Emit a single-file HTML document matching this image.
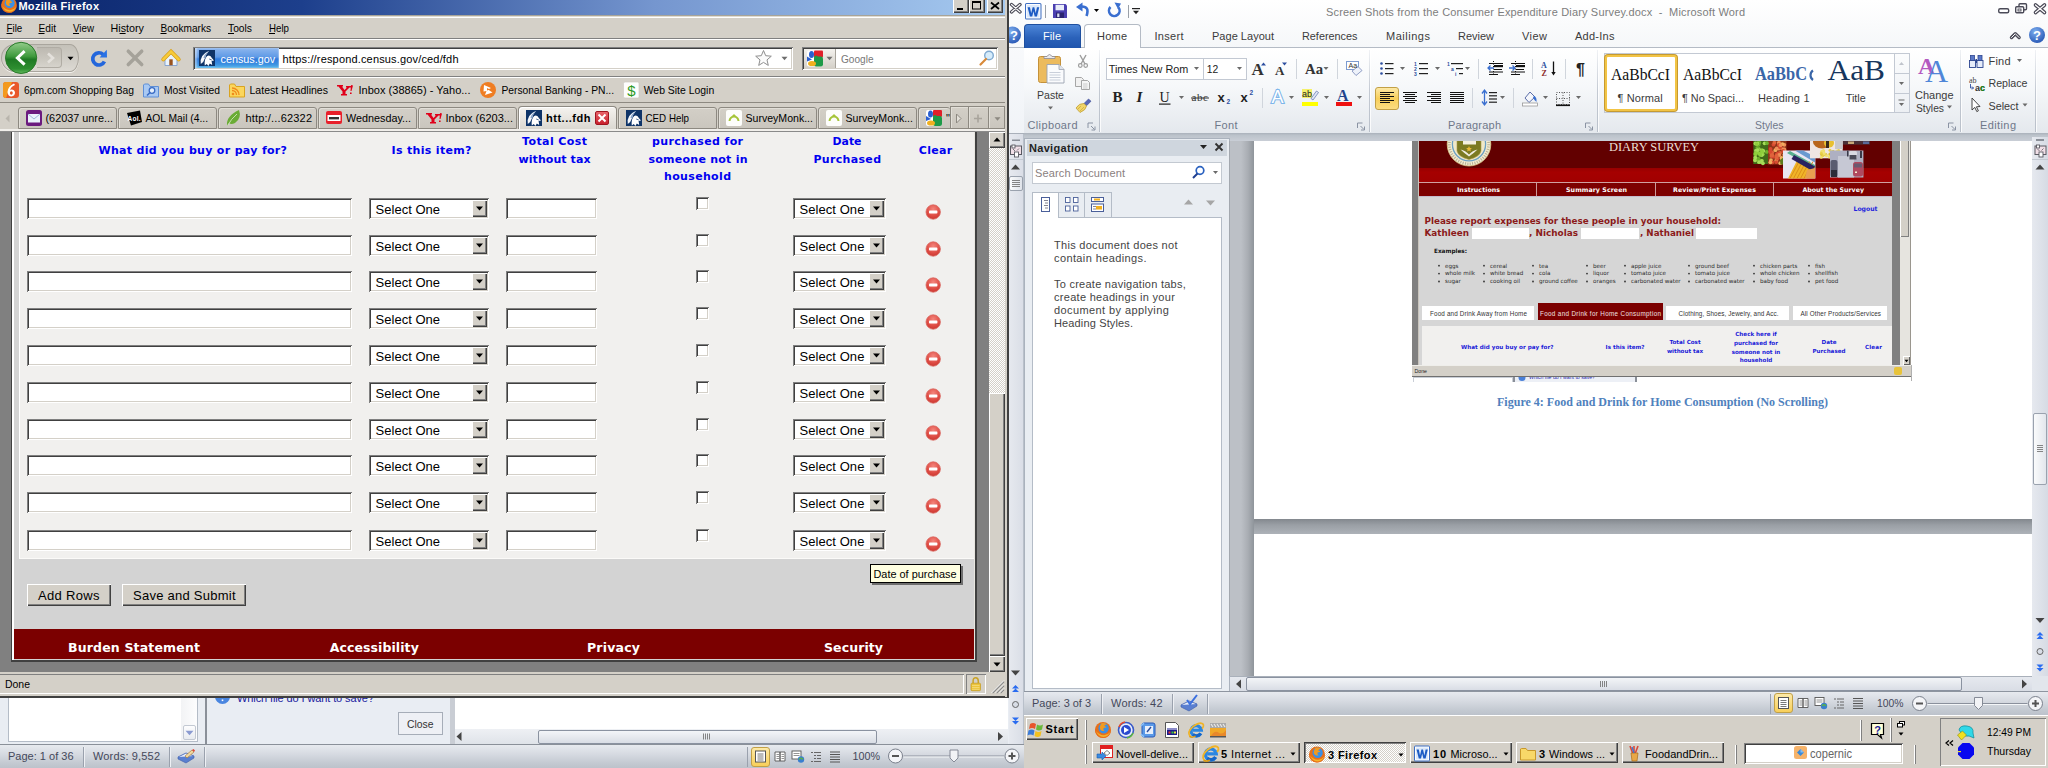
<!DOCTYPE html><html><head><meta charset="utf-8"><title>Mozilla Firefox</title><style>html,body{margin:0;padding:0;background:#fff;overflow:hidden}#r{position:relative;width:2048px;height:768px;overflow:hidden;background:#d4d0c8}#r div{position:absolute;box-sizing:border-box}#r svg.o{position:absolute;left:0;top:0}text{white-space:pre}</style></head><body><div id="r"><div style="left:1009px;top:0px;width:1039px;height:768px;background:#ffffff;"></div>
<div style="left:1009px;top:0px;width:15px;height:138px;background:linear-gradient(#fcfdfe,#f0f3f7);"></div>
<div style="left:1009px;top:47px;width:15px;height:1px;background:#b8bfc8;"></div>
<div style="left:1024px;top:0px;width:1024px;height:24px;background:linear-gradient(#ffffff,#fafbfc);"></div>
<div style="left:1045px;top:5px;width:1px;height:13px;background:#9aa0a8;"></div>
<div style="left:1128px;top:5px;width:1px;height:13px;background:#9aa0a8;"></div>
<div style="left:1024px;top:24px;width:1024px;height:24px;background:linear-gradient(#fafbfc,#f5f7f9);"></div>
<div style="left:1024px;top:47px;width:1024px;height:1px;background:#b4bbc5;"></div>
<div style="left:1024px;top:24px;width:57px;height:24px;background:linear-gradient(#4d86d8,#2b62ba 55%,#1f55ad);border:1px solid #1e4f9f;border-bottom:none;border-radius:4px 4px 0 0;"></div>
<div style="left:1084px;top:24px;width:57px;height:24px;background:#ffffff;border:1px solid #b4bbc5;border-bottom:none;border-radius:4px 4px 0 0;"></div>
<div style="left:1024px;top:48px;width:1024px;height:85px;background:linear-gradient(#ffffff 0%,#f6f8fa 45%,#e4e8ed 100%);"></div>
<div style="left:1024px;top:133px;width:1024px;height:1px;background:#a9b0ba;"></div>
<div style="left:1099px;top:50px;width:1px;height:82px;background:linear-gradient(#f0f2f5,#c3c9d2 50%,#b9c0ca);"></div>
<div style="left:1100px;top:50px;width:1px;height:82px;background:rgba(255,255,255,.8);"></div>
<div style="left:1369px;top:50px;width:1px;height:82px;background:linear-gradient(#f0f2f5,#c3c9d2 50%,#b9c0ca);"></div>
<div style="left:1370px;top:50px;width:1px;height:82px;background:rgba(255,255,255,.8);"></div>
<div style="left:1597px;top:50px;width:1px;height:82px;background:linear-gradient(#f0f2f5,#c3c9d2 50%,#b9c0ca);"></div>
<div style="left:1598px;top:50px;width:1px;height:82px;background:rgba(255,255,255,.8);"></div>
<div style="left:1960px;top:50px;width:1px;height:82px;background:linear-gradient(#f0f2f5,#c3c9d2 50%,#b9c0ca);"></div>
<div style="left:1961px;top:50px;width:1px;height:82px;background:rgba(255,255,255,.8);"></div>
<div style="left:2035px;top:50px;width:1px;height:82px;background:linear-gradient(#f0f2f5,#c3c9d2 50%,#b9c0ca);"></div>
<div style="left:2036px;top:50px;width:1px;height:82px;background:rgba(255,255,255,.8);"></div>
<div style="left:1106px;top:58px;width:98px;height:22px;background:#fff;border:1px solid #c3c9d3;"></div>
<div style="left:1203px;top:58px;width:44px;height:22px;background:#fff;border:1px solid #c3c9d3;"></div>
<div style="left:1296px;top:59px;width:1px;height:20px;background:#d0d5dc;"></div>
<div style="left:1337px;top:59px;width:1px;height:20px;background:#d0d5dc;"></div>
<div style="left:1262px;top:88px;width:1px;height:20px;background:#d0d5dc;"></div>
<div style="left:1302px;top:89px;width:10px;height:9px;background:#f4f06a;"></div>
<div style="left:1302px;top:102px;width:16px;height:4px;background:#ffff00;"></div>
<div style="left:1336px;top:102px;width:16px;height:4px;background:#ee1111;"></div>
<div style="left:1478px;top:59px;width:1px;height:20px;background:#d0d5dc;"></div>
<div style="left:1532px;top:59px;width:1px;height:20px;background:#d0d5dc;"></div>
<div style="left:1565px;top:59px;width:1px;height:20px;background:#d0d5dc;"></div>
<div style="left:1375px;top:87px;width:24px;height:23px;background:linear-gradient(#fde9a6,#f8cf5a 50%,#fbdd82);border:1px solid #c2a046;border-radius:3px;"></div>
<div style="left:1472px;top:88px;width:1px;height:20px;background:#d0d5dc;"></div>
<div style="left:1513px;top:88px;width:1px;height:20px;background:#d0d5dc;"></div>
<div style="left:1604px;top:53px;width:306px;height:60px;background:#fff;border:1px solid #c3c9d3;"></div>
<div style="left:1605px;top:55px;width:72px;height:56px;background:#fff;border:2px solid #f2c445;border-radius:3px;box-shadow:0 0 0 1px #c59a32;"></div>
<div style="left:1889px;top:54px;width:5px;height:12px;background:#fff;"></div>
<div style="left:1894px;top:53px;width:16px;height:60px;background:linear-gradient(#fbfcfd,#eceff3);border:1px solid #c3c9d3;"></div>
<div style="left:1895px;top:73px;width:14px;height:1px;background:#c3c9d3;"></div>
<div style="left:1895px;top:93px;width:14px;height:1px;background:#c3c9d3;"></div>
<div style="left:1024px;top:133px;width:1024px;height:8px;background:linear-gradient(#aab1bb,#bcc3cb 30%,#c9ced6);"></div>
<div style="left:1009px;top:133px;width:15px;height:612px;background:linear-gradient(to right,#e6e9ef,#d9dde6);"></div>
<div style="left:1009px;top:133px;width:15px;height:1px;background:#a9b0ba;"></div>
<div style="left:1009px;top:159px;width:15px;height:1px;background:#c3c9d1;"></div>
<div style="left:1009px;top:176px;width:14px;height:15px;background:linear-gradient(to right,#fafbfc,#dfe3ea);border:1px solid #9aa2ae;border-radius:2px;"></div>
<div style="left:1023px;top:134px;width:1px;height:611px;background:#b9c0ca;"></div>
<div style="left:1024px;top:138px;width:206px;height:555px;background:#e9edf2;border:1px solid #aab2bd;"></div>
<div style="left:1027px;top:140px;width:200px;height:16px;background:#cfd6de;"></div>
<div style="left:1032px;top:162px;width:190px;height:22px;background:#fff;border:1px solid #c3c9d1;"></div>
<div style="left:1032px;top:217px;width:190px;height:472px;background:#fff;border:1px solid #b4bcc7;"></div>
<div style="left:1032px;top:192px;width:80px;height:26px;background:#e9edf2;border:1px solid #b4bcc7;"></div>
<div style="left:1032px;top:192px;width:27px;height:26px;background:#fff;border:1px solid #b4bcc7;border-bottom:none;"></div>
<div style="left:1084px;top:193px;width:1px;height:24px;background:#b4bcc7;"></div>
<div style="left:1229px;top:141px;width:803px;height:535px;background:linear-gradient(to right,#8a9098 0px,#bcc0c6 1px,#bcc0c6 12px,#a9adb3 19px,#8f959b 25px,#a4abb3 26px);"></div>
<div style="left:1254px;top:141px;width:778px;height:378px;background:#fff;"></div>
<div style="left:1254px;top:534px;width:778px;height:142px;background:#fff;"></div>
<div style="left:1254px;top:519px;width:778px;height:15px;background:linear-gradient(#83888e,#9a9fa5 40%,#adb2b8);"></div>
<div style="left:1412px;top:141px;width:500px;height:241px;background:#fff;"></div>
<div style="left:1412px;top:141px;width:6px;height:224px;background:#808080;"></div>
<div style="left:1418px;top:141px;width:1px;height:224px;background:#c8c4bc;"></div>
<div style="left:1419px;top:141px;width:473px;height:27px;background:#620000;"></div>
<div style="left:1419px;top:168px;width:473px;height:14px;background:linear-gradient(#960000,#a60000 30%,#a00000);"></div>
<div style="left:1419px;top:182px;width:473px;height:15px;background:#7d0000;border-top:1px solid #d0a0a0;border-bottom:1px solid #c4bccc;"></div>
<div style="left:1536px;top:183px;width:1px;height:13px;background:#c99;"></div>
<div style="left:1655px;top:183px;width:1px;height:13px;background:#c99;"></div>
<div style="left:1773px;top:183px;width:1px;height:13px;background:#c99;"></div>
<div style="left:1419px;top:197px;width:473px;height:168px;background:#d6d6d6;"></div>
<div style="left:1472px;top:228px;width:57px;height:11px;background:#fff;"></div>
<div style="left:1581px;top:228px;width:58px;height:11px;background:#fff;"></div>
<div style="left:1696px;top:228px;width:61px;height:11px;background:#fff;"></div>
<div style="left:1422px;top:306px;width:112px;height:14px;background:#fff;"></div>
<div style="left:1538px;top:303px;width:125px;height:17px;background:#7b0000;"></div>
<div style="left:1666px;top:306px;width:123px;height:14px;background:#fff;"></div>
<div style="left:1793px;top:306px;width:94px;height:14px;background:#fff;"></div>
<div style="left:1422px;top:326px;width:470px;height:39px;background:#f1f0ee;"></div>
<div style="left:1892px;top:141px;width:8px;height:224px;background:#808080;"></div>
<div style="left:1900px;top:141px;width:10px;height:224px;background:#e6e4df;"></div>
<div style="left:1900px;top:141px;width:9px;height:96px;background:#d4d0c8;box-shadow:inset 1px 0 0 #fff, inset -1px -1px 0 #808080;"></div>
<div style="left:1903px;top:356px;width:7px;height:9px;background:#d4d0c8;box-shadow:inset 1px 1px 0 #fff, inset -1px -1px 0 #606060;"></div>
<div style="left:1910px;top:141px;width:1px;height:224px;background:#9a968e;"></div>
<div style="left:1412px;top:365px;width:499px;height:11px;background:#d4d0c8;border-top:1px solid #efeeea;"></div>
<div style="left:1894px;top:367px;width:8px;height:8px;background:#e8c33a;border-radius:2px;"></div>
<div style="left:1412px;top:376px;width:499px;height:1px;background:#707070;"></div>
<div style="left:1413px;top:377px;width:100px;height:5px;background:#fff;border:1px solid #c9ced6;border-bottom:none;"></div>
<div style="left:1513px;top:377px;width:124px;height:5px;background:#edf0f6;border-left:2px solid #8a8f98;border-right:2px solid #8a8f98;"></div>
<div style="left:1911px;top:365px;width:1px;height:16px;background:#b0b0b0;"></div>
<div style="left:2032px;top:137px;width:16px;height:539px;background:linear-gradient(to right,#e6e9ef,#d6dbe4);"></div>
<div style="left:2032px;top:159px;width:16px;height:1px;background:#c3c9d1;"></div>
<div style="left:2033px;top:413px;width:14px;height:72px;background:linear-gradient(to right,#fafbfc,#e2e6ec);border:1px solid #9aa2ae;border-radius:2px;"></div>
<div style="left:1230px;top:676px;width:818px;height:15px;background:linear-gradient(#e6e9ef,#d9dde5);border-top:1px solid #a9b0ba;"></div>
<div style="left:1246px;top:677px;width:716px;height:14px;background:linear-gradient(#f3f5f8,#e6e9ee 50%,#d9dde5);border:1px solid #8a92a0;border-radius:2px;"></div>
<div style="left:2032px;top:676px;width:16px;height:16px;background:#e2e6ec;"></div>
<div style="left:1024px;top:691px;width:1024px;height:24px;background:linear-gradient(#e7eaef 0%,#d6dae1 40%,#c3c9d1 80%,#bcc2cb 100%);border-top:1px solid #8e95a0;"></div>
<div style="left:1101px;top:694px;width:1px;height:20px;background:#9aa1ad;"></div>
<div style="left:1102px;top:694px;width:1px;height:20px;background:#eef0f4;"></div>
<div style="left:1172px;top:694px;width:1px;height:20px;background:#9aa1ad;"></div>
<div style="left:1173px;top:694px;width:1px;height:20px;background:#eef0f4;"></div>
<div style="left:1207px;top:694px;width:1px;height:20px;background:#9aa1ad;"></div>
<div style="left:1208px;top:694px;width:1px;height:20px;background:#eef0f4;"></div>
<div style="left:1770px;top:694px;width:1px;height:20px;background:#9aa1ad;"></div>
<div style="left:1774px;top:693px;width:19px;height:20px;background:linear-gradient(#fde9a6,#f8cf5a);border:1px solid #c2a046;border-radius:3px;"></div>
<div style="left:1024px;top:715px;width:1024px;height:53px;background:#d4d0c8;border-top:1px solid #fff;"></div>
<div style="left:1026px;top:718px;width:52px;height:22px;background:#d4d0c8;box-shadow:inset 1px 1px 0 #fff, inset -1px -1px 0 #404040, inset -2px -2px 0 #808080, inset 2px 2px 0 #d4d0c8;"></div>
<div style="left:1085px;top:720px;width:2px;height:20px;background:#fff;border-right:1px solid #808080;"></div>
<div style="left:1085px;top:745px;width:2px;height:19px;background:#fff;border-right:1px solid #808080;"></div>
<div style="left:1092px;top:742px;width:102px;height:21px;background:#d4d0c8;box-shadow:inset 1px 1px 0 #fff, inset -1px -1px 0 #404040, inset -2px -2px 0 #808080, inset 2px 2px 0 #d4d0c8;"></div>
<div style="left:1198px;top:742px;width:102px;height:21px;background:#d4d0c8;box-shadow:inset 1px 1px 0 #fff, inset -1px -1px 0 #404040, inset -2px -2px 0 #808080, inset 2px 2px 0 #d4d0c8;"></div>
<div style="left:1304px;top:742px;width:102px;height:21px;background:#ebe9e4;box-shadow:inset 1px 1px 0 #404040, inset -1px -1px 0 #fff, inset 2px 2px 0 #808080;background-image:conic-gradient(#fff 25%,#d4d0c8 0 50%,#fff 0 75%,#d4d0c8 0);background-size:2px 2px;"></div>
<div style="left:1410px;top:742px;width:102px;height:21px;background:#d4d0c8;box-shadow:inset 1px 1px 0 #fff, inset -1px -1px 0 #404040, inset -2px -2px 0 #808080, inset 2px 2px 0 #d4d0c8;"></div>
<div style="left:1516px;top:742px;width:102px;height:21px;background:#d4d0c8;box-shadow:inset 1px 1px 0 #fff, inset -1px -1px 0 #404040, inset -2px -2px 0 #808080, inset 2px 2px 0 #d4d0c8;"></div>
<div style="left:1622px;top:742px;width:102px;height:21px;background:#d4d0c8;box-shadow:inset 1px 1px 0 #fff, inset -1px -1px 0 #404040, inset -2px -2px 0 #808080, inset 2px 2px 0 #d4d0c8;"></div>
<div style="left:1735px;top:745px;width:2px;height:19px;background:#fff;border-right:1px solid #808080;"></div>
<div style="left:1744px;top:743px;width:159px;height:21px;background:#fff;box-shadow:inset 1px 1px 0 #808080, inset -1px -1px 0 #fff, inset 2px 2px 0 #404040, inset -2px -2px 0 #d4d0c8;"></div>
<div style="left:1860px;top:720px;width:2px;height:21px;background:#fff;border-right:1px solid #808080;"></div>
<div style="left:1890px;top:718px;width:2px;height:24px;background:#fff;border-right:1px solid #808080;"></div>
<div style="left:1914px;top:745px;width:2px;height:19px;background:#fff;border-right:1px solid #808080;"></div>
<div style="left:1940px;top:718px;width:106px;height:48px;background:#d4d0c8;box-shadow:inset 1px 1px 0 #808080, inset -1px -1px 0 #fff;"></div>
<div style="left:0px;top:698px;width:1009px;height:47px;background:#e9edf3;"></div>
<div style="left:8px;top:697px;width:190px;height:45px;background:#fff;border:1px solid #b4bcc7;border-top:none;"></div>
<div style="left:181px;top:697px;width:16px;height:44px;background:linear-gradient(to right,#f2f3f5,#fdfdfe);"></div>
<div style="left:183px;top:725px;width:13px;height:15px;background:linear-gradient(#fdfdfe,#e8ebf0);border:1px solid #c3c9d3;border-radius:2px;"></div>
<div style="left:205px;top:697px;width:2px;height:47px;background:#8a9099;"></div>
<div style="left:398px;top:712px;width:45px;height:23px;background:#eef0f5;border:1px solid #a6adb8;"></div>
<div style="left:450px;top:697px;width:5px;height:47px;background:#c9cdd4;"></div>
<div style="left:455px;top:697px;width:553px;height:32px;background:#fff;"></div>
<div style="left:455px;top:729px;width:553px;height:15px;background:linear-gradient(#eef0f4,#dfe3e9);"></div>
<div style="left:538px;top:730px;width:339px;height:14px;background:linear-gradient(#f3f5f8,#e6e9ee 50%,#d9dde5);border:1px solid #8a92a0;border-radius:2px;"></div>
<div style="left:0px;top:744px;width:1024px;height:24px;background:linear-gradient(#e7eaef 0%,#d6dae1 40%,#c3c9d1 80%,#bcc2cb 100%);border-top:1px solid #8a9099;"></div>
<div style="left:83px;top:747px;width:1px;height:20px;background:#9aa1ad;"></div>
<div style="left:84px;top:747px;width:1px;height:20px;background:#eef0f4;"></div>
<div style="left:169px;top:747px;width:1px;height:20px;background:#9aa1ad;"></div>
<div style="left:170px;top:747px;width:1px;height:20px;background:#eef0f4;"></div>
<div style="left:204px;top:747px;width:1px;height:20px;background:#9aa1ad;"></div>
<div style="left:205px;top:747px;width:1px;height:20px;background:#eef0f4;"></div>
<div style="left:747px;top:747px;width:1px;height:20px;background:#9aa1ad;"></div>
<div style="left:751px;top:746.5px;width:19px;height:20px;background:linear-gradient(#fde9a6,#f8cf5a);border:1px solid #c2a046;border-radius:3px;"></div>
<div style="left:0px;top:0px;width:1006px;height:15px;background:linear-gradient(to right,#0a246a 0%,#1d3f8c 30%,#7596cf 65%,#a6caf0 100%);"></div>
<div style="left:0px;top:15px;width:1006px;height:1px;background:#a8a498;"></div>
<div style="left:0px;top:16px;width:1006px;height:1px;background:#dedbd3;"></div>
<div style="left:0px;top:17px;width:1006px;height:1px;background:#ffffff;"></div>
<div style="left:953px;top:-2px;width:16px;height:15px;background:#d4d0c8;box-shadow:inset 1px 1px 0 #fff, inset -1px -1px 0 #404040, inset -2px -2px 0 #808080, inset 2px 2px 0 #d4d0c8;"></div>
<div style="left:969px;top:-2px;width:16px;height:15px;background:#d4d0c8;box-shadow:inset 1px 1px 0 #fff, inset -1px -1px 0 #404040, inset -2px -2px 0 #808080, inset 2px 2px 0 #d4d0c8;"></div>
<div style="left:987px;top:-2px;width:16px;height:15px;background:#d4d0c8;box-shadow:inset 1px 1px 0 #fff, inset -1px -1px 0 #404040, inset -2px -2px 0 #808080, inset 2px 2px 0 #d4d0c8;"></div>
<div style="left:0px;top:38px;width:1006px;height:1px;background:#808080;"></div>
<div style="left:0px;top:39px;width:1006px;height:1px;background:#ffffff;"></div>
<div style="left:1px;top:44px;width:78px;height:28px;background:linear-gradient(#c4c1b9,#cfccc5 50%,#dddad4);border:1px solid #a9a59d;border-radius:14px 9px 9px 14px / 14px 14px 14px 14px;box-shadow:0 1px 0 #f4f2ee;"></div>
<div style="left:37px;top:47px;width:25px;height:21px;background:linear-gradient(#bdb9b1,#cbc8c0 60%,#d6d3cc);border:1px solid #b0aca4;border-left:none;border-radius:0 4px 4px 0;"></div>
<div style="left:193px;top:47px;width:600px;height:23px;background:#fff;box-shadow:inset 1px 1px 0 #808080, inset -1px -1px 0 #fff, inset 2px 2px 0 #404040, inset -2px -2px 0 #d4d0c8;"></div>
<div style="left:195px;top:48px;width:84px;height:20px;background:linear-gradient(#8db6ee 0%,#5f9ae6 45%,#2f7add 55%,#3b8fe0 80%,#56b4ea 100%);box-shadow:inset 2px 0 2px rgba(255,255,255,.45), inset -1px 0 1px rgba(255,255,255,.3);"></div>
<div style="left:802px;top:47px;width:196px;height:23px;background:#fff;box-shadow:inset 1px 1px 0 #808080, inset -1px -1px 0 #fff, inset 2px 2px 0 #404040, inset -2px -2px 0 #d4d0c8;"></div>
<div style="left:804px;top:49px;width:32px;height:19px;background:linear-gradient(#f4f2ee,#d4d0c8);border-right:1px solid #a8a49c;"></div>
<div style="left:0px;top:76px;width:1006px;height:1px;background:#808080;"></div>
<div style="left:0px;top:77px;width:1006px;height:1px;background:#ffffff;"></div>
<div style="left:0px;top:102px;width:1006px;height:1px;background:#8d8981;"></div>
<div style="left:0px;top:105px;width:1006px;height:27px;background:#d4d0c8;"></div>
<div style="left:18px;top:107px;width:99px;height:22px;background:linear-gradient(#d3cfc7,#cac6be);border:1px solid #8d8981;border-radius:3px 3px 0 0;box-shadow:inset 1px 1px 0 #e2dfd8;"></div>
<div style="left:118px;top:107px;width:99px;height:22px;background:linear-gradient(#d3cfc7,#cac6be);border:1px solid #8d8981;border-radius:3px 3px 0 0;box-shadow:inset 1px 1px 0 #e2dfd8;"></div>
<div style="left:218px;top:107px;width:99px;height:22px;background:linear-gradient(#d3cfc7,#cac6be);border:1px solid #8d8981;border-radius:3px 3px 0 0;box-shadow:inset 1px 1px 0 #e2dfd8;"></div>
<div style="left:318px;top:107px;width:99px;height:22px;background:linear-gradient(#d3cfc7,#cac6be);border:1px solid #8d8981;border-radius:3px 3px 0 0;box-shadow:inset 1px 1px 0 #e2dfd8;"></div>
<div style="left:418px;top:107px;width:99px;height:22px;background:linear-gradient(#d3cfc7,#cac6be);border:1px solid #8d8981;border-radius:3px 3px 0 0;box-shadow:inset 1px 1px 0 #e2dfd8;"></div>
<div style="left:518px;top:106px;width:99px;height:23px;background:linear-gradient(#f5f3ef,#ebe8e3 40%,#dbd8d1);border:1px solid #8d8981;border-bottom:none;border-radius:4px 4px 0 0;box-shadow:inset 1px 1px 0 #fff;"></div>
<div style="left:618px;top:107px;width:99px;height:22px;background:linear-gradient(#d3cfc7,#cac6be);border:1px solid #8d8981;border-radius:3px 3px 0 0;box-shadow:inset 1px 1px 0 #e2dfd8;"></div>
<div style="left:718px;top:107px;width:99px;height:22px;background:linear-gradient(#d3cfc7,#cac6be);border:1px solid #8d8981;border-radius:3px 3px 0 0;box-shadow:inset 1px 1px 0 #e2dfd8;"></div>
<div style="left:818px;top:107px;width:99px;height:22px;background:linear-gradient(#d3cfc7,#cac6be);border:1px solid #8d8981;border-radius:3px 3px 0 0;box-shadow:inset 1px 1px 0 #e2dfd8;"></div>
<div style="left:918px;top:107px;width:32px;height:22px;background:linear-gradient(#d3cfc7,#cac6be);border:1px solid #8d8981;border-radius:3px 3px 0 0;box-shadow:inset 1px 1px 0 #e2dfd8;border-right:none;"></div>
<div style="left:0px;top:129px;width:1006px;height:2px;background:#f1efeb;"></div>
<div style="left:0px;top:131px;width:1006px;height:1px;background:#8a8a8a;"></div>
<div style="left:595px;top:111px;width:14px;height:14px;background:linear-gradient(#e8646a,#c8202c);border:1px solid #a0141e;border-radius:2px;"></div>
<div style="left:950px;top:106px;width:18px;height:23px;background:linear-gradient(#d3cfc7,#cac6be);border:1px solid #8d8981;border-right:none;box-shadow:inset 1px 1px 0 #e2dfd8;"></div>
<div style="left:968px;top:106px;width:20px;height:23px;background:linear-gradient(#d3cfc7,#cac6be);border:1px solid #8d8981;border-right:none;box-shadow:inset 1px 1px 0 #e2dfd8;"></div>
<div style="left:988px;top:106px;width:17px;height:23px;background:linear-gradient(#d3cfc7,#cac6be);border:1px solid #8d8981;box-shadow:inset 1px 1px 0 #e2dfd8;"></div>
<div style="left:0px;top:132px;width:1006px;height:541px;background:#808080;"></div>
<div style="left:11px;top:132px;width:965px;height:529px;background:#d3d3d3;border-left:1px solid #404040;border-right:1px solid #404040;border-bottom:1px solid #d4d0c8;box-shadow:inset 2px 0 0 #fff, inset -1px 0 0 #e8e6e0;"></div>
<div style="left:19px;top:132px;width:955px;height:427px;background:#f1f0ee;border-left:1px solid #fff;border-bottom:1px solid #fbfaf8;"></div>
<div style="left:11px;top:660px;width:966px;height:2px;background:#404040;"></div>
<div style="left:975px;top:132px;width:2px;height:530px;background:#404040;"></div>
<div style="left:27px;top:198px;width:325px;height:21px;background:#fff;box-shadow:inset 1px 1px 0 #808080, inset -1px -1px 0 #fff, inset 2px 2px 0 #404040, inset -2px -2px 0 #d4d0c8;"></div>
<div style="left:369px;top:198px;width:120px;height:21px;background:#fff;box-shadow:inset 1px 1px 0 #808080, inset -1px -1px 0 #fff, inset 2px 2px 0 #404040, inset -2px -2px 0 #d4d0c8;"></div>
<div style="left:472px;top:200px;width:15px;height:17px;background:#d4d0c8;box-shadow:inset 1px 1px 0 #fff, inset -1px -1px 0 #404040, inset -2px -2px 0 #808080, inset 2px 2px 0 #d4d0c8;"></div>
<div style="left:506px;top:198px;width:91px;height:21px;background:#fff;box-shadow:inset 1px 1px 0 #808080, inset -1px -1px 0 #fff, inset 2px 2px 0 #404040, inset -2px -2px 0 #d4d0c8;"></div>
<div style="left:696px;top:197px;width:13px;height:13px;background:#fff;box-shadow:inset 1px 1px 0 #808080, inset -1px -1px 0 #fff, inset 2px 2px 0 #404040, inset -2px -2px 0 #d4d0c8;"></div>
<div style="left:793px;top:198px;width:93px;height:21px;background:#fff;box-shadow:inset 1px 1px 0 #808080, inset -1px -1px 0 #fff, inset 2px 2px 0 #404040, inset -2px -2px 0 #d4d0c8;"></div>
<div style="left:869px;top:200px;width:15px;height:17px;background:#d4d0c8;box-shadow:inset 1px 1px 0 #fff, inset -1px -1px 0 #404040, inset -2px -2px 0 #808080, inset 2px 2px 0 #d4d0c8;"></div>
<div style="left:27px;top:235px;width:325px;height:21px;background:#fff;box-shadow:inset 1px 1px 0 #808080, inset -1px -1px 0 #fff, inset 2px 2px 0 #404040, inset -2px -2px 0 #d4d0c8;"></div>
<div style="left:369px;top:235px;width:120px;height:21px;background:#fff;box-shadow:inset 1px 1px 0 #808080, inset -1px -1px 0 #fff, inset 2px 2px 0 #404040, inset -2px -2px 0 #d4d0c8;"></div>
<div style="left:472px;top:237px;width:15px;height:17px;background:#d4d0c8;box-shadow:inset 1px 1px 0 #fff, inset -1px -1px 0 #404040, inset -2px -2px 0 #808080, inset 2px 2px 0 #d4d0c8;"></div>
<div style="left:506px;top:235px;width:91px;height:21px;background:#fff;box-shadow:inset 1px 1px 0 #808080, inset -1px -1px 0 #fff, inset 2px 2px 0 #404040, inset -2px -2px 0 #d4d0c8;"></div>
<div style="left:696px;top:234px;width:13px;height:13px;background:#fff;box-shadow:inset 1px 1px 0 #808080, inset -1px -1px 0 #fff, inset 2px 2px 0 #404040, inset -2px -2px 0 #d4d0c8;"></div>
<div style="left:793px;top:235px;width:93px;height:21px;background:#fff;box-shadow:inset 1px 1px 0 #808080, inset -1px -1px 0 #fff, inset 2px 2px 0 #404040, inset -2px -2px 0 #d4d0c8;"></div>
<div style="left:869px;top:237px;width:15px;height:17px;background:#d4d0c8;box-shadow:inset 1px 1px 0 #fff, inset -1px -1px 0 #404040, inset -2px -2px 0 #808080, inset 2px 2px 0 #d4d0c8;"></div>
<div style="left:27px;top:271px;width:325px;height:21px;background:#fff;box-shadow:inset 1px 1px 0 #808080, inset -1px -1px 0 #fff, inset 2px 2px 0 #404040, inset -2px -2px 0 #d4d0c8;"></div>
<div style="left:369px;top:271px;width:120px;height:21px;background:#fff;box-shadow:inset 1px 1px 0 #808080, inset -1px -1px 0 #fff, inset 2px 2px 0 #404040, inset -2px -2px 0 #d4d0c8;"></div>
<div style="left:472px;top:273px;width:15px;height:17px;background:#d4d0c8;box-shadow:inset 1px 1px 0 #fff, inset -1px -1px 0 #404040, inset -2px -2px 0 #808080, inset 2px 2px 0 #d4d0c8;"></div>
<div style="left:506px;top:271px;width:91px;height:21px;background:#fff;box-shadow:inset 1px 1px 0 #808080, inset -1px -1px 0 #fff, inset 2px 2px 0 #404040, inset -2px -2px 0 #d4d0c8;"></div>
<div style="left:696px;top:270px;width:13px;height:13px;background:#fff;box-shadow:inset 1px 1px 0 #808080, inset -1px -1px 0 #fff, inset 2px 2px 0 #404040, inset -2px -2px 0 #d4d0c8;"></div>
<div style="left:793px;top:271px;width:93px;height:21px;background:#fff;box-shadow:inset 1px 1px 0 #808080, inset -1px -1px 0 #fff, inset 2px 2px 0 #404040, inset -2px -2px 0 #d4d0c8;"></div>
<div style="left:869px;top:273px;width:15px;height:17px;background:#d4d0c8;box-shadow:inset 1px 1px 0 #fff, inset -1px -1px 0 #404040, inset -2px -2px 0 #808080, inset 2px 2px 0 #d4d0c8;"></div>
<div style="left:27px;top:308px;width:325px;height:21px;background:#fff;box-shadow:inset 1px 1px 0 #808080, inset -1px -1px 0 #fff, inset 2px 2px 0 #404040, inset -2px -2px 0 #d4d0c8;"></div>
<div style="left:369px;top:308px;width:120px;height:21px;background:#fff;box-shadow:inset 1px 1px 0 #808080, inset -1px -1px 0 #fff, inset 2px 2px 0 #404040, inset -2px -2px 0 #d4d0c8;"></div>
<div style="left:472px;top:310px;width:15px;height:17px;background:#d4d0c8;box-shadow:inset 1px 1px 0 #fff, inset -1px -1px 0 #404040, inset -2px -2px 0 #808080, inset 2px 2px 0 #d4d0c8;"></div>
<div style="left:506px;top:308px;width:91px;height:21px;background:#fff;box-shadow:inset 1px 1px 0 #808080, inset -1px -1px 0 #fff, inset 2px 2px 0 #404040, inset -2px -2px 0 #d4d0c8;"></div>
<div style="left:696px;top:307px;width:13px;height:13px;background:#fff;box-shadow:inset 1px 1px 0 #808080, inset -1px -1px 0 #fff, inset 2px 2px 0 #404040, inset -2px -2px 0 #d4d0c8;"></div>
<div style="left:793px;top:308px;width:93px;height:21px;background:#fff;box-shadow:inset 1px 1px 0 #808080, inset -1px -1px 0 #fff, inset 2px 2px 0 #404040, inset -2px -2px 0 #d4d0c8;"></div>
<div style="left:869px;top:310px;width:15px;height:17px;background:#d4d0c8;box-shadow:inset 1px 1px 0 #fff, inset -1px -1px 0 #404040, inset -2px -2px 0 #808080, inset 2px 2px 0 #d4d0c8;"></div>
<div style="left:27px;top:345px;width:325px;height:21px;background:#fff;box-shadow:inset 1px 1px 0 #808080, inset -1px -1px 0 #fff, inset 2px 2px 0 #404040, inset -2px -2px 0 #d4d0c8;"></div>
<div style="left:369px;top:345px;width:120px;height:21px;background:#fff;box-shadow:inset 1px 1px 0 #808080, inset -1px -1px 0 #fff, inset 2px 2px 0 #404040, inset -2px -2px 0 #d4d0c8;"></div>
<div style="left:472px;top:347px;width:15px;height:17px;background:#d4d0c8;box-shadow:inset 1px 1px 0 #fff, inset -1px -1px 0 #404040, inset -2px -2px 0 #808080, inset 2px 2px 0 #d4d0c8;"></div>
<div style="left:506px;top:345px;width:91px;height:21px;background:#fff;box-shadow:inset 1px 1px 0 #808080, inset -1px -1px 0 #fff, inset 2px 2px 0 #404040, inset -2px -2px 0 #d4d0c8;"></div>
<div style="left:696px;top:344px;width:13px;height:13px;background:#fff;box-shadow:inset 1px 1px 0 #808080, inset -1px -1px 0 #fff, inset 2px 2px 0 #404040, inset -2px -2px 0 #d4d0c8;"></div>
<div style="left:793px;top:345px;width:93px;height:21px;background:#fff;box-shadow:inset 1px 1px 0 #808080, inset -1px -1px 0 #fff, inset 2px 2px 0 #404040, inset -2px -2px 0 #d4d0c8;"></div>
<div style="left:869px;top:347px;width:15px;height:17px;background:#d4d0c8;box-shadow:inset 1px 1px 0 #fff, inset -1px -1px 0 #404040, inset -2px -2px 0 #808080, inset 2px 2px 0 #d4d0c8;"></div>
<div style="left:27px;top:382px;width:325px;height:21px;background:#fff;box-shadow:inset 1px 1px 0 #808080, inset -1px -1px 0 #fff, inset 2px 2px 0 #404040, inset -2px -2px 0 #d4d0c8;"></div>
<div style="left:369px;top:382px;width:120px;height:21px;background:#fff;box-shadow:inset 1px 1px 0 #808080, inset -1px -1px 0 #fff, inset 2px 2px 0 #404040, inset -2px -2px 0 #d4d0c8;"></div>
<div style="left:472px;top:384px;width:15px;height:17px;background:#d4d0c8;box-shadow:inset 1px 1px 0 #fff, inset -1px -1px 0 #404040, inset -2px -2px 0 #808080, inset 2px 2px 0 #d4d0c8;"></div>
<div style="left:506px;top:382px;width:91px;height:21px;background:#fff;box-shadow:inset 1px 1px 0 #808080, inset -1px -1px 0 #fff, inset 2px 2px 0 #404040, inset -2px -2px 0 #d4d0c8;"></div>
<div style="left:696px;top:381px;width:13px;height:13px;background:#fff;box-shadow:inset 1px 1px 0 #808080, inset -1px -1px 0 #fff, inset 2px 2px 0 #404040, inset -2px -2px 0 #d4d0c8;"></div>
<div style="left:793px;top:382px;width:93px;height:21px;background:#fff;box-shadow:inset 1px 1px 0 #808080, inset -1px -1px 0 #fff, inset 2px 2px 0 #404040, inset -2px -2px 0 #d4d0c8;"></div>
<div style="left:869px;top:384px;width:15px;height:17px;background:#d4d0c8;box-shadow:inset 1px 1px 0 #fff, inset -1px -1px 0 #404040, inset -2px -2px 0 #808080, inset 2px 2px 0 #d4d0c8;"></div>
<div style="left:27px;top:419px;width:325px;height:21px;background:#fff;box-shadow:inset 1px 1px 0 #808080, inset -1px -1px 0 #fff, inset 2px 2px 0 #404040, inset -2px -2px 0 #d4d0c8;"></div>
<div style="left:369px;top:419px;width:120px;height:21px;background:#fff;box-shadow:inset 1px 1px 0 #808080, inset -1px -1px 0 #fff, inset 2px 2px 0 #404040, inset -2px -2px 0 #d4d0c8;"></div>
<div style="left:472px;top:421px;width:15px;height:17px;background:#d4d0c8;box-shadow:inset 1px 1px 0 #fff, inset -1px -1px 0 #404040, inset -2px -2px 0 #808080, inset 2px 2px 0 #d4d0c8;"></div>
<div style="left:506px;top:419px;width:91px;height:21px;background:#fff;box-shadow:inset 1px 1px 0 #808080, inset -1px -1px 0 #fff, inset 2px 2px 0 #404040, inset -2px -2px 0 #d4d0c8;"></div>
<div style="left:696px;top:418px;width:13px;height:13px;background:#fff;box-shadow:inset 1px 1px 0 #808080, inset -1px -1px 0 #fff, inset 2px 2px 0 #404040, inset -2px -2px 0 #d4d0c8;"></div>
<div style="left:793px;top:419px;width:93px;height:21px;background:#fff;box-shadow:inset 1px 1px 0 #808080, inset -1px -1px 0 #fff, inset 2px 2px 0 #404040, inset -2px -2px 0 #d4d0c8;"></div>
<div style="left:869px;top:421px;width:15px;height:17px;background:#d4d0c8;box-shadow:inset 1px 1px 0 #fff, inset -1px -1px 0 #404040, inset -2px -2px 0 #808080, inset 2px 2px 0 #d4d0c8;"></div>
<div style="left:27px;top:455px;width:325px;height:21px;background:#fff;box-shadow:inset 1px 1px 0 #808080, inset -1px -1px 0 #fff, inset 2px 2px 0 #404040, inset -2px -2px 0 #d4d0c8;"></div>
<div style="left:369px;top:455px;width:120px;height:21px;background:#fff;box-shadow:inset 1px 1px 0 #808080, inset -1px -1px 0 #fff, inset 2px 2px 0 #404040, inset -2px -2px 0 #d4d0c8;"></div>
<div style="left:472px;top:457px;width:15px;height:17px;background:#d4d0c8;box-shadow:inset 1px 1px 0 #fff, inset -1px -1px 0 #404040, inset -2px -2px 0 #808080, inset 2px 2px 0 #d4d0c8;"></div>
<div style="left:506px;top:455px;width:91px;height:21px;background:#fff;box-shadow:inset 1px 1px 0 #808080, inset -1px -1px 0 #fff, inset 2px 2px 0 #404040, inset -2px -2px 0 #d4d0c8;"></div>
<div style="left:696px;top:454px;width:13px;height:13px;background:#fff;box-shadow:inset 1px 1px 0 #808080, inset -1px -1px 0 #fff, inset 2px 2px 0 #404040, inset -2px -2px 0 #d4d0c8;"></div>
<div style="left:793px;top:455px;width:93px;height:21px;background:#fff;box-shadow:inset 1px 1px 0 #808080, inset -1px -1px 0 #fff, inset 2px 2px 0 #404040, inset -2px -2px 0 #d4d0c8;"></div>
<div style="left:869px;top:457px;width:15px;height:17px;background:#d4d0c8;box-shadow:inset 1px 1px 0 #fff, inset -1px -1px 0 #404040, inset -2px -2px 0 #808080, inset 2px 2px 0 #d4d0c8;"></div>
<div style="left:27px;top:492px;width:325px;height:21px;background:#fff;box-shadow:inset 1px 1px 0 #808080, inset -1px -1px 0 #fff, inset 2px 2px 0 #404040, inset -2px -2px 0 #d4d0c8;"></div>
<div style="left:369px;top:492px;width:120px;height:21px;background:#fff;box-shadow:inset 1px 1px 0 #808080, inset -1px -1px 0 #fff, inset 2px 2px 0 #404040, inset -2px -2px 0 #d4d0c8;"></div>
<div style="left:472px;top:494px;width:15px;height:17px;background:#d4d0c8;box-shadow:inset 1px 1px 0 #fff, inset -1px -1px 0 #404040, inset -2px -2px 0 #808080, inset 2px 2px 0 #d4d0c8;"></div>
<div style="left:506px;top:492px;width:91px;height:21px;background:#fff;box-shadow:inset 1px 1px 0 #808080, inset -1px -1px 0 #fff, inset 2px 2px 0 #404040, inset -2px -2px 0 #d4d0c8;"></div>
<div style="left:696px;top:491px;width:13px;height:13px;background:#fff;box-shadow:inset 1px 1px 0 #808080, inset -1px -1px 0 #fff, inset 2px 2px 0 #404040, inset -2px -2px 0 #d4d0c8;"></div>
<div style="left:793px;top:492px;width:93px;height:21px;background:#fff;box-shadow:inset 1px 1px 0 #808080, inset -1px -1px 0 #fff, inset 2px 2px 0 #404040, inset -2px -2px 0 #d4d0c8;"></div>
<div style="left:869px;top:494px;width:15px;height:17px;background:#d4d0c8;box-shadow:inset 1px 1px 0 #fff, inset -1px -1px 0 #404040, inset -2px -2px 0 #808080, inset 2px 2px 0 #d4d0c8;"></div>
<div style="left:27px;top:530px;width:325px;height:21px;background:#fff;box-shadow:inset 1px 1px 0 #808080, inset -1px -1px 0 #fff, inset 2px 2px 0 #404040, inset -2px -2px 0 #d4d0c8;"></div>
<div style="left:369px;top:530px;width:120px;height:21px;background:#fff;box-shadow:inset 1px 1px 0 #808080, inset -1px -1px 0 #fff, inset 2px 2px 0 #404040, inset -2px -2px 0 #d4d0c8;"></div>
<div style="left:472px;top:532px;width:15px;height:17px;background:#d4d0c8;box-shadow:inset 1px 1px 0 #fff, inset -1px -1px 0 #404040, inset -2px -2px 0 #808080, inset 2px 2px 0 #d4d0c8;"></div>
<div style="left:506px;top:530px;width:91px;height:21px;background:#fff;box-shadow:inset 1px 1px 0 #808080, inset -1px -1px 0 #fff, inset 2px 2px 0 #404040, inset -2px -2px 0 #d4d0c8;"></div>
<div style="left:696px;top:529px;width:13px;height:13px;background:#fff;box-shadow:inset 1px 1px 0 #808080, inset -1px -1px 0 #fff, inset 2px 2px 0 #404040, inset -2px -2px 0 #d4d0c8;"></div>
<div style="left:793px;top:530px;width:93px;height:21px;background:#fff;box-shadow:inset 1px 1px 0 #808080, inset -1px -1px 0 #fff, inset 2px 2px 0 #404040, inset -2px -2px 0 #d4d0c8;"></div>
<div style="left:869px;top:532px;width:15px;height:17px;background:#d4d0c8;box-shadow:inset 1px 1px 0 #fff, inset -1px -1px 0 #404040, inset -2px -2px 0 #808080, inset 2px 2px 0 #d4d0c8;"></div>
<div style="left:27px;top:584px;width:84px;height:22px;background:#d4d0c8;box-shadow:inset 1px 1px 0 #fff, inset -1px -1px 0 #404040, inset -2px -2px 0 #808080, inset 2px 2px 0 #d4d0c8;"></div>
<div style="left:122px;top:584px;width:124px;height:22px;background:#d4d0c8;box-shadow:inset 1px 1px 0 #fff, inset -1px -1px 0 #404040, inset -2px -2px 0 #808080, inset 2px 2px 0 #d4d0c8;"></div>
<div style="left:872px;top:566px;width:91px;height:19px;background:#6e6e6e;"></div>
<div style="left:870px;top:564px;width:91px;height:19px;background:#ffffe1;border:1px solid #000;"></div>
<div style="left:14px;top:629px;width:960px;height:30px;background:#7b0000;"></div>
<div style="left:989px;top:132px;width:16px;height:541px;background:#e9e7e3;background-image:conic-gradient(#fff 25%,#d4d0c8 0 50%,#fff 0 75%,#d4d0c8 0);background-size:2px 2px;"></div>
<div style="left:989px;top:132px;width:16px;height:16px;background:#d4d0c8;box-shadow:inset 1px 1px 0 #fff, inset -1px -1px 0 #404040, inset -2px -2px 0 #808080, inset 2px 2px 0 #d4d0c8;"></div>
<div style="left:989px;top:393px;width:16px;height:263px;background:#d4d0c8;box-shadow:inset 1px 1px 0 #fff, inset -1px -1px 0 #404040, inset -2px -2px 0 #808080, inset 2px 2px 0 #d4d0c8;"></div>
<div style="left:989px;top:656px;width:16px;height:16px;background:#d4d0c8;box-shadow:inset 1px 1px 0 #fff, inset -1px -1px 0 #404040, inset -2px -2px 0 #808080, inset 2px 2px 0 #d4d0c8;"></div>
<div style="left:0px;top:672px;width:1006px;height:26px;background:#d4d0c8;"></div>
<div style="left:0px;top:674px;width:964px;height:20px;background:#d4d0c8;box-shadow:inset 0 1px 0 #808080, inset -1px -1px 0 #fff;"></div>
<div style="left:966px;top:674px;width:20px;height:20px;background:#d4d0c8;box-shadow:inset 1px 1px 0 #808080, inset -1px -1px 0 #fff;"></div>
<div style="left:0px;top:696px;width:1009px;height:2px;background:#404040;"></div>
<div style="left:1005px;top:0px;width:2px;height:697px;background:#d4d0c8;"></div>
<div style="left:1007px;top:0px;width:2px;height:698px;background:#404040;"></div>
<svg class="o" width="2048" height="768" viewBox="0 0 2048 768"><clipPath id="cpw0"><rect x="1009" y="0" width="1039" height="768"/></clipPath>
<path d="M1011.500,4.500 l8.500,7.500 M1020,4.500 l-8.500,7.500" stroke="#4b4b58" stroke-width="3.400" fill="none" stroke-linecap="round" clip-path="url(#cpw0)"/><path d="M1011.500,4.500 l8.500,7.500 M1020,4.500 l-8.500,7.500" stroke="#fff" stroke-width="1.100" fill="none" stroke-linecap="round"/>
<defs><radialGradient id="hb" cx="0.4" cy="0.3" r="0.8"><stop offset="0" stop-color="#7fb0f0"/><stop offset="1" stop-color="#1f4fb0"/></radialGradient></defs>
<clipPath id="cpw"><rect x="1009" y="0" width="1039" height="768"/></clipPath>
<circle cx="1012.5" cy="35" r="8.5" fill="url(#hb)" clip-path="url(#cpw)"/>
<text x="1014" y="40" font-size="13" fill="#fff" font-family='"Liberation Sans", sans-serif' font-weight="bold" text-anchor="middle">?</text>
<g transform="translate(1025,3) scale(1.03125)"><rect x="0.5" y="0.5" width="15" height="15" rx="1" fill="#fdfeff" stroke="#3f6fc2" stroke-width="1"/><rect x="2" y="2" width="12" height="12" fill="#dbe8fa"/><path d="M2.5,4 L4.8,4 L6,10 L7.4,4 L9,4 L10.4,10 L11.6,4 L13.8,4 L11.6,13 L9.4,13 L8.2,8 L7,13 L4.8,13Z" fill="#1c5bc4"/></g>
<g transform="translate(1053,4)"><path d="M0,0 h12.5 l1.5,1.5 v12.5 h-14z" fill="#4a3fb0"/><rect x="2.5" y="0.8" width="8.5" height="5.5" fill="#e8ecf8"/><rect x="3" y="8.5" width="8" height="5.5" fill="#2a2470"/><rect x="4.2" y="9.5" width="2.2" height="3.6" fill="#d8dcf0"/></g>
<path d="M1086.5,16 Q1090,6 1081,6.5" stroke="#3a6fd0" stroke-width="2.6" fill="none"/><path d="M1076,7 l6.5,-4.5 v9z" fill="#3a6fd0"/>
<path d="M1094.0,9.0h5l-2.5,3z" fill="#000"/>
<path d="M1110.5,7 A5.3,5.3 0 1 0 1118.5,7.5" stroke="#3a6fd0" stroke-width="2.6" fill="none"/><path d="M1114.5,2.5 l6.5,1 -3,5.5z" fill="#3a6fd0"/>
<rect x="1132" y="8" width="8" height="1.2" fill="#222"/>
<path d="M1133.0,10.75h6l-3.0,3.5z" fill="#222"/>
<text x="1326" y="15.5" font-size="11" fill="#7d7d7d" font-family='"Liberation Sans", sans-serif' textLength="419" lengthAdjust="spacing">Screen Shots from the Consumer Expenditure Diary Survey.docx  -  Microsoft Word</text>
<rect x="1998.700" y="8.700" width="10" height="4" rx="1.500" fill="#fff" stroke="#4b4b58" stroke-width="1.400"/>
<rect x="2019" y="3.700" width="7.500" height="6" rx="1" fill="#fff" stroke="#4b4b58" stroke-width="1.400"/><rect x="2015.700" y="6.700" width="8" height="6" rx="1" fill="#fff" stroke="#4b4b58" stroke-width="1.400"/><rect x="2018" y="9" width="3" height="2" fill="none" stroke="#4b4b58" stroke-width="0.900"/>
<path d="M2035.500,5 l9,7.500 M2044.500,5 l-9,7.500" stroke="#4b4b58" stroke-width="3.600" fill="none" stroke-linecap="round"/><path d="M2035.500,5 l9,7.500 M2044.500,5 l-9,7.500" stroke="#fff" stroke-width="1.200" fill="none" stroke-linecap="round"/>
<text x="1043" y="40" font-size="11" fill="#fff" font-family='"Liberation Sans", sans-serif' textLength="18" lengthAdjust="spacing">File</text>
<text x="1097" y="40" font-size="11" fill="#3b3b3b" font-family='"Liberation Sans", sans-serif' textLength="30" lengthAdjust="spacing">Home</text>
<text x="1154.5" y="40" font-size="11" fill="#3b3b3b" font-family='"Liberation Sans", sans-serif' textLength="29" lengthAdjust="spacing">Insert</text>
<text x="1212" y="40" font-size="11" fill="#3b3b3b" font-family='"Liberation Sans", sans-serif' textLength="62" lengthAdjust="spacing">Page Layout</text>
<text x="1302" y="40" font-size="11" fill="#3b3b3b" font-family='"Liberation Sans", sans-serif' textLength="55.5" lengthAdjust="spacingAndGlyphs">References</text>
<text x="1386" y="40" font-size="11" fill="#3b3b3b" font-family='"Liberation Sans", sans-serif' textLength="44" lengthAdjust="spacing">Mailings</text>
<text x="1458" y="40" font-size="11" fill="#3b3b3b" font-family='"Liberation Sans", sans-serif' textLength="36" lengthAdjust="spacingAndGlyphs">Review</text>
<text x="1522" y="40" font-size="11" fill="#3b3b3b" font-family='"Liberation Sans", sans-serif' textLength="25" lengthAdjust="spacing">View</text>
<text x="1575" y="40" font-size="11" fill="#3b3b3b" font-family='"Liberation Sans", sans-serif' textLength="39.5" lengthAdjust="spacing">Add-Ins</text>
<path d="M2011.500,37.500 l3.800,-3.800 3.800,3.800" stroke="#4b4b58" stroke-width="3.400" fill="none" stroke-linecap="round" stroke-linejoin="round"/><path d="M2011.500,37.500 l3.800,-3.800 3.800,3.800" stroke="#fff" stroke-width="1" fill="none" stroke-linecap="round" stroke-linejoin="round"/>
<circle cx="2037" cy="35" r="8" fill="url(#hb)"/>
<text x="2037" y="40" font-size="13" fill="#fff" font-family='"Liberation Sans", sans-serif' font-weight="bold" text-anchor="middle">?</text>
<text x="1027.5" y="128.5" font-size="11" fill="#6f788a" font-family='"Liberation Sans", sans-serif' textLength="50" lengthAdjust="spacing">Clipboard</text>
<text x="1214.5" y="128.5" font-size="11" fill="#6f788a" font-family='"Liberation Sans", sans-serif' textLength="23" lengthAdjust="spacing">Font</text>
<text x="1448" y="128.5" font-size="11" fill="#6f788a" font-family='"Liberation Sans", sans-serif' textLength="53" lengthAdjust="spacing">Paragraph</text>
<text x="1755" y="128.5" font-size="11" fill="#6f788a" font-family='"Liberation Sans", sans-serif' textLength="28.5" lengthAdjust="spacingAndGlyphs">Styles</text>
<text x="1980" y="128.5" font-size="11" fill="#6f788a" font-family='"Liberation Sans", sans-serif' textLength="36" lengthAdjust="spacing">Editing</text>
<path d="M1088,128 v-5 h5" stroke="#8a93a3" fill="none"/><path d="M1091,126 l3.5,3.5 M1095,126.5 v3.5 h-3.5" stroke="#8a93a3" fill="none"/>
<path d="M1357.5,128 v-5 h5" stroke="#8a93a3" fill="none"/><path d="M1360.5,126 l3.5,3.5 M1364.5,126.5 v3.5 h-3.5" stroke="#8a93a3" fill="none"/>
<path d="M1585.5,128 v-5 h5" stroke="#8a93a3" fill="none"/><path d="M1588.5,126 l3.5,3.5 M1592.5,126.5 v3.5 h-3.5" stroke="#8a93a3" fill="none"/>
<path d="M1948.5,128 v-5 h5" stroke="#8a93a3" fill="none"/><path d="M1951.5,126 l3.5,3.5 M1955.5,126.5 v3.5 h-3.5" stroke="#8a93a3" fill="none"/>
<g transform="translate(1038,53)"><rect x="0.5" y="3.5" width="22" height="26" rx="2" fill="#ecbb5e" stroke="#c4913a"/><path d="M6,5.5 h11 v-2 h-3 q-2.5,-4 -5,0 h-3z" fill="#e9e9ee" stroke="#8a8a96" stroke-width="0.8"/><path d="M9,11.5 h12 l5,5 v13.5 h-17z" fill="#fafbfd" stroke="#9aa2b0" stroke-width="0.9"/><path d="M21,11.5 v5 h5" fill="#dfe4ec" stroke="#9aa2b0" stroke-width="0.8"/><path d="M11.5,19.5 h11 M11.5,22 h11 M11.5,24.5 h11 M11.5,27 h11" stroke="#c3cad6" stroke-width="0.9"/></g>
<text x="1037" y="98.5" font-size="11" fill="#3b3b3b" font-family='"Liberation Sans", sans-serif' textLength="27" lengthAdjust="spacingAndGlyphs">Paste</text>
<path d="M1048.0,106.5h5l-2.5,3z" fill="#6a6a6a"/>
<path d="M1080,55 L1085,64 M1086,55 L1081,64" stroke="#9c9c9c" stroke-width="1.4"/><circle cx="1080.3" cy="65.5" r="1.8" fill="none" stroke="#9c9c9c" stroke-width="1.2"/><circle cx="1085.7" cy="65.5" r="1.8" fill="none" stroke="#9c9c9c" stroke-width="1.2"/>
<g transform="translate(1075,77)"><path d="M0.5,0.5 h6 l2,2 v7 h-8z" fill="#f1f1f1" stroke="#a6a6a6"/><path d="M6.5,3.5 h6 l2,2 v7 h-8z" fill="#f6f6f6" stroke="#a6a6a6"/><path d="M8,7 h4.5 M8,9 h4.5 M8,11 h4.5" stroke="#c2c2c2" stroke-width="0.8"/></g>
<g transform="translate(1075,98)"><path d="M9,5.5 L13.5,1 L16,3.2 L11.5,7.8Z" fill="#5868b8" stroke="#39488f" stroke-width="0.6"/><path d="M1,10 Q4,5 9,5.5 L11.5,8 Q11,12 5,14.5 Z" fill="#f1d56a" stroke="#b8972c" stroke-width="0.7"/><path d="M3,11 l3,-3 M5,13 l4,-4" stroke="#c7a83a" stroke-width="0.7"/></g>
<text x="1108.75" y="72.5" font-size="11" fill="#222" font-family='"Liberation Sans", sans-serif' textLength="79.5" lengthAdjust="spacingAndGlyphs">Times New Rom</text>
<path d="M1194.0,67.0h5l-2.5,3z" fill="#6a6a6a"/>
<text x="1206.75" y="72.5" font-size="11" fill="#222" font-family='"Liberation Sans", sans-serif' textLength="11.5" lengthAdjust="spacingAndGlyphs">12</text>
<path d="M1237.0,67.0h5l-2.5,3z" fill="#6a6a6a"/>
<text x="1251.5" y="75" font-size="17" fill="#333" font-family='"Liberation Serif", serif' font-weight="bold">A</text>
<path d="M1261.0,65.5h5l-2.5,-3z" fill="#2c4ea0"/>
<text x="1275" y="75" font-size="13" fill="#333" font-family='"Liberation Serif", serif' font-weight="bold">A</text>
<path d="M1282.0,62.5h5l-2.5,3z" fill="#2c4ea0"/>
<text x="1305" y="74" font-size="15" fill="#333" font-family='"Liberation Serif", serif' font-weight="bold" textLength="18" lengthAdjust="spacingAndGlyphs">Aa</text>
<path d="M1323.5,67.0h5l-2.5,3z" fill="#6a6a6a"/>
<g transform="translate(1346,61)"><rect x="0.5" y="0.5" width="12" height="8" fill="#fff" stroke="#7d9bd0"/><path d="M6,10 L12,5.5 L16,9.5 L10,14.5Z" fill="#eef2fa" stroke="#7788b8" stroke-width="0.8"/></g>
<text x="1348.5" y="68" font-size="7" fill="#333" font-family='"Liberation Sans", sans-serif'>Aa</text>
<text x="1112.5" y="102" font-size="15" fill="#222" font-family='"Liberation Serif", serif' font-weight="bold">B</text>
<text x="1136.5" y="102" font-size="15" fill="#222" font-family='"Liberation Serif", serif' font-weight="bold" font-style="italic">I</text>
<text x="1159.5" y="102" font-size="14" fill="#222" font-family='"Liberation Serif", serif'>U</text>
<rect x="1159" y="103.5" width="11.5" height="1.2" fill="#222"/>
<path d="M1179.0,96.0h5l-2.5,3z" fill="#6a6a6a"/>
<text x="1191.5" y="101" font-size="11" fill="#333" font-family='"Liberation Serif", serif' textLength="16.5" lengthAdjust="spacing">abc</text>
<rect x="1191" y="97.5" width="18" height="1" fill="#333"/>
<text x="1217.5" y="101.5" font-size="13" fill="#222" font-family='"Liberation Sans", sans-serif' font-weight="bold">x</text>
<text x="1226.5" y="104" font-size="6.5" fill="#2c4ea0" font-family='"Liberation Sans", sans-serif' font-weight="bold">2</text>
<text x="1240.5" y="101.5" font-size="13" fill="#222" font-family='"Liberation Sans", sans-serif' font-weight="bold">x</text>
<text x="1249.5" y="95" font-size="6.5" fill="#2c4ea0" font-family='"Liberation Sans", sans-serif' font-weight="bold">2</text>
<text x="1271.5" y="103" font-size="18" fill="#fff" font-family='"Liberation Sans", sans-serif' style="paint-order:stroke;stroke:#7fb6ea;stroke-width:2.2px;">A</text>
<path d="M1289.0,96.0h5l-2.5,3z" fill="#6a6a6a"/>
<text x="1302" y="97" font-size="9" fill="#222" font-family='"Liberation Sans", sans-serif' textLength="10" lengthAdjust="spacingAndGlyphs">ab</text>
<path d="M1311,98.5 L1316.5,91 L1318.5,92.5 L1313,100Z" fill="#dfe6f5" stroke="#5b6fb0" stroke-width="0.7"/>
<path d="M1324.0,96.0h5l-2.5,3z" fill="#6a6a6a"/>
<text x="1337" y="101" font-size="16" fill="#22448c" font-family='"Liberation Serif", serif' font-weight="bold">A</text>
<path d="M1357.0,96.0h5l-2.5,3z" fill="#6a6a6a"/>
<circle cx="1381.5" cy="63.5" r="1.3" fill="#2c4ea0"/><rect x="1385" y="63" width="8.5" height="1.2" fill="#222"/>
<circle cx="1381.5" cy="68.5" r="1.3" fill="#2c4ea0"/><rect x="1385" y="68" width="8.5" height="1.2" fill="#222"/>
<circle cx="1381.5" cy="73.5" r="1.3" fill="#2c4ea0"/><rect x="1385" y="73" width="8.5" height="1.2" fill="#222"/>
<path d="M1400.0,67.0h5l-2.5,3z" fill="#6a6a6a"/>
<text x="1414" y="65.5" font-size="5" fill="#2c4ea0" font-family='"Liberation Sans", sans-serif' font-weight="bold">1</text>
<rect x="1419" y="63" width="9" height="1.2" fill="#222"/>
<text x="1414" y="70.5" font-size="5" fill="#2c4ea0" font-family='"Liberation Sans", sans-serif' font-weight="bold">2</text>
<rect x="1419" y="68" width="9" height="1.2" fill="#222"/>
<text x="1414" y="75.5" font-size="5" fill="#2c4ea0" font-family='"Liberation Sans", sans-serif' font-weight="bold">3</text>
<rect x="1419" y="73" width="9" height="1.2" fill="#222"/>
<path d="M1435.0,67.0h5l-2.5,3z" fill="#6a6a6a"/>
<text x="1447" y="65.5" font-size="5" fill="#2c4ea0" font-family='"Liberation Sans", sans-serif' font-weight="bold">1</text>
<text x="1451" y="70.5" font-size="5" fill="#2c4ea0" font-family='"Liberation Sans", sans-serif' font-weight="bold">a</text>
<text x="1455" y="76" font-size="5" fill="#2c4ea0" font-family='"Liberation Sans", sans-serif' font-weight="bold">i</text>
<rect x="1451" y="63" width="12" height="1.2" fill="#222"/><rect x="1456" y="68" width="7" height="1.2" fill="#222"/><rect x="1459" y="73" width="4" height="1.2" fill="#222"/>
<path d="M1465.0,67.0h5l-2.5,3z" fill="#6a6a6a"/>
<rect x="1489" y="63" width="14" height="1" fill="#111"/><rect x="1494" y="65" width="9" height="2.200" fill="#111"/><rect x="1494" y="69" width="8" height="1" fill="#111"/><rect x="1489" y="71.500" width="14" height="1" fill="#111"/><rect x="1489" y="74" width="9" height="1" fill="#111"/><path d="M1493.5,61 v15" stroke="#111" stroke-width="1" stroke-dasharray="1,1.500"/>
<path d="M1494,68 h-6 M1490.5,65.500 l-2.500,2.500 2.500,2.500" stroke="#3a6fd0" stroke-width="1.300" fill="none"/>
<rect x="1511" y="63" width="14" height="1" fill="#111"/><rect x="1516" y="65" width="9" height="2.200" fill="#111"/><rect x="1516" y="69" width="8" height="1" fill="#111"/><rect x="1511" y="71.500" width="14" height="1" fill="#111"/><rect x="1511" y="74" width="9" height="1" fill="#111"/><path d="M1515.5,61 v15" stroke="#111" stroke-width="1" stroke-dasharray="1,1.500"/>
<path d="M1509,68 h6 M1512.5,65.500 l2.500,2.500 -2.500,2.500" stroke="#3a6fd0" stroke-width="1.300" fill="none"/>
<text x="1541" y="67.5" font-size="8" fill="#2c4ea0" font-family='"Liberation Serif", serif' font-weight="bold">A</text>
<text x="1541.5" y="76" font-size="8" fill="#8c2a2a" font-family='"Liberation Serif", serif' font-weight="bold">Z</text>
<path d="M1553.500,61.500 v12" stroke="#111" stroke-width="1.300" fill="none"/><path d="M1551.300,72 h4.400 l-2.200,3.500z" fill="#111"/>
<text x="1576" y="75" font-size="16" fill="#222" font-family='"Liberation Sans", sans-serif' font-weight="bold">¶</text>
<rect x="1380" y="92" width="14" height="1" fill="#111"/><rect x="1380" y="94" width="10" height="1" fill="#111"/><rect x="1380" y="96" width="14" height="1" fill="#111"/><rect x="1380" y="98" width="10" height="1" fill="#111"/><rect x="1380" y="100" width="14" height="1" fill="#111"/><rect x="1380" y="102" width="10" height="1" fill="#111"/>
<rect x="1403.0" y="92" width="14" height="1" fill="#111"/><rect x="1405.0" y="94" width="10" height="1" fill="#111"/><rect x="1403.0" y="96" width="14" height="1" fill="#111"/><rect x="1405.0" y="98" width="10" height="1" fill="#111"/><rect x="1403.0" y="100" width="14" height="1" fill="#111"/><rect x="1405.0" y="102" width="10" height="1" fill="#111"/>
<rect x="1427" y="92" width="14" height="1" fill="#111"/><rect x="1431" y="94" width="10" height="1" fill="#111"/><rect x="1427" y="96" width="14" height="1" fill="#111"/><rect x="1431" y="98" width="10" height="1" fill="#111"/><rect x="1427" y="100" width="14" height="1" fill="#111"/><rect x="1431" y="102" width="10" height="1" fill="#111"/>
<rect x="1450" y="92" width="14" height="1" fill="#111"/><rect x="1450" y="94" width="14" height="1" fill="#111"/><rect x="1450" y="96" width="14" height="1" fill="#111"/><rect x="1450" y="98" width="14" height="1" fill="#111"/><rect x="1450" y="100" width="14" height="1" fill="#111"/><rect x="1450" y="102" width="14" height="1" fill="#111"/>
<path d="M1484.5,90.5 v14 M1482,93.5 l2.5,-3.5 2.5,3.5 M1482,101.500 l2.500,3.500 2.500,-3.500" stroke="#3a6fd0" stroke-width="1.3" fill="none"/>
<rect x="1489" y="92.0" width="8" height="1.2" fill="#222"/><rect x="1489" y="95.2" width="8" height="1.2" fill="#222"/><rect x="1489" y="98.4" width="8" height="1.2" fill="#222"/><rect x="1489" y="101.6" width="8" height="1.2" fill="#222"/>
<path d="M1500.0,96.0h5l-2.5,3z" fill="#6a6a6a"/>
<g transform="translate(1522,90)"><path d="M3,8 L8,2 L13,7 L7,12.500Z" fill="#f4f6fb" stroke="#4b5f9f" stroke-width="0.9"/><path d="M12,6 q3,1 2.500,6 q-2.500,-2 -3.500,-4.500z" fill="#3a6fd0"/><rect x="0.500" y="13" width="15" height="3" fill="#fff" stroke="#999" stroke-width="0.800"/></g>
<path d="M1543.0,96.0h5l-2.5,3z" fill="#6a6a6a"/>
<rect x="1556.500" y="92.500" width="13" height="12" fill="none" stroke="#555" stroke-width="1" stroke-dasharray="1,1.500"/><path d="M1563,92.500 v12 M1556.500,98.500 h13" stroke="#555" stroke-dasharray="1,1.500"/><rect x="1556" y="104.500" width="14" height="1.600" fill="#111"/>
<path d="M1576.0,96.0h5l-2.5,3z" fill="#6a6a6a"/>
<text x="1611" y="79.5" font-size="17" fill="#111" font-family='"Liberation Serif", serif' textLength="59" lengthAdjust="spacingAndGlyphs">AaBbCcI</text>
<text x="1683" y="79.5" font-size="17" fill="#111" font-family='"Liberation Serif", serif' textLength="59" lengthAdjust="spacingAndGlyphs">AaBbCcI</text>
<text x="1755" y="80" font-size="18" fill="#3a66a8" font-family='"Liberation Serif", serif' font-weight="bold" textLength="52" lengthAdjust="spacingAndGlyphs">AaBbC</text>
<path d="M1813,70.500 a5,5.500 0 0 0 0,9.500" stroke="#3a66a8" stroke-width="2.200" fill="none"/>
<text x="1827.5" y="80" font-size="29" fill="#17365d" font-family='"Liberation Serif", serif' textLength="57.5" lengthAdjust="spacingAndGlyphs">AaB</text>
<text x="1617.6" y="101.8" font-size="11" fill="#3b3b3b" font-family='"Liberation Sans", sans-serif' textLength="45" lengthAdjust="spacing">¶ Normal</text>
<text x="1682" y="101.8" font-size="11" fill="#3b3b3b" font-family='"Liberation Sans", sans-serif' textLength="62" lengthAdjust="spacingAndGlyphs">¶ No Spaci...</text>
<text x="1758" y="101.8" font-size="11" fill="#3b3b3b" font-family='"Liberation Sans", sans-serif' textLength="51.5" lengthAdjust="spacing">Heading 1</text>
<text x="1845.7" y="101.8" font-size="11" fill="#3b3b3b" font-family='"Liberation Sans", sans-serif' textLength="20" lengthAdjust="spacingAndGlyphs">Title</text>
<path d="M1899.0,65.0h5l-2.5,-3z" fill="#c0c4cc"/>
<path d="M1899.0,82.0h5l-2.5,3z" fill="#6a6a6a"/>
<rect x="1898.500" y="99.500" width="6" height="1" fill="#6a6a6a"/>
<path d="M1899.0,103.0h5l-2.5,3z" fill="#6a6a6a"/>
<text x="1918" y="74" font-size="24" fill="#b45ac0" font-family='"Liberation Serif", serif' font-weight="bold">A</text>
<text x="1925" y="82" font-size="32" fill="#4f86d8" font-family='"Liberation Serif", serif'>A</text>
<text x="1915" y="99" font-size="11" fill="#3b3b3b" font-family='"Liberation Sans", sans-serif' textLength="38.5" lengthAdjust="spacingAndGlyphs">Change</text>
<text x="1916" y="112" font-size="11" fill="#3b3b3b" font-family='"Liberation Sans", sans-serif' textLength="28" lengthAdjust="spacingAndGlyphs">Styles</text>
<path d="M1947.0,105.5h5l-2.5,3z" fill="#6a6a6a"/>
<g transform="translate(1969,55)"><rect x="1.500" y="0.500" width="4" height="5" fill="#5a78c8" stroke="#2c4590" stroke-width="0.800"/><rect x="9" y="0.500" width="4" height="5" fill="#5a78c8" stroke="#2c4590" stroke-width="0.800"/><rect x="0.500" y="5.500" width="6" height="7" fill="#e6ecfa" stroke="#2c4590" stroke-width="0.900"/><rect x="8" y="5.500" width="6" height="7" fill="#e6ecfa" stroke="#2c4590" stroke-width="0.900"/><rect x="6.500" y="4" width="1.500" height="4" fill="#2c4590"/></g>
<text x="1988.5" y="64.5" font-size="11" fill="#3b3b3b" font-family='"Liberation Sans", sans-serif' textLength="22" lengthAdjust="spacing">Find</text>
<path d="M2017.0,59.0h5l-2.5,3z" fill="#6a6a6a"/>
<text x="1969" y="83" font-size="8" fill="#444" font-family='"Liberation Serif", serif'>ab</text>
<text x="1975" y="90.5" font-size="9" fill="#333" font-family='"Liberation Sans", sans-serif' font-weight="bold">ac</text>
<text x="1980" y="90.5" font-size="9" fill="#1a8a1a" font-family='"Liberation Sans", sans-serif' font-weight="bold">c</text>
<path d="M1970.500,84 v4 h3 M1972,86.500 l1.500,1.500 -1.500,1.500" stroke="#2c4ea0" stroke-width="0.900" fill="none"/>
<text x="1988.5" y="87" font-size="11" fill="#3b3b3b" font-family='"Liberation Sans", sans-serif' textLength="39" lengthAdjust="spacingAndGlyphs">Replace</text>
<path d="M1972,98 v12 l2.800,-2.600 2,4.200 1.600,-0.800 -2,-4 3.600,-0.300z" fill="#fff" stroke="#333" stroke-width="0.900"/>
<text x="1988.5" y="109.5" font-size="11" fill="#3b3b3b" font-family='"Liberation Sans", sans-serif' textLength="30" lengthAdjust="spacingAndGlyphs">Select</text>
<path d="M2022.5,103.5h5l-2.5,3z" fill="#6a6a6a"/>
<rect x="1012" y="139.500" width="8" height="1.500" fill="#8a8f98"/>
<g transform="translate(1010,144.5)"><rect x="0.500" y="1.500" width="11" height="8.500" fill="#f1dfe7" stroke="#5a5a62" stroke-width="1"/><rect x="2" y="0.500" width="3" height="3" fill="#fff" stroke="#5a5a62" stroke-width="0.900"/><rect x="4.500" y="7.500" width="4" height="5" fill="#fff" stroke="#5a5a62" stroke-width="0.900"/><path d="M3,4.500 l2,2 M7,6 l2,-2" stroke="#5a5a62" stroke-width="0.800"/></g>
<path d="M1011.0,169.5h9l-4.5,-5z" fill="#444"/>
<path d="M1012,180.500 h8 M1012,182.500 h8 M1012,184.500 h8 M1012,186.500 h8" stroke="#777" stroke-width="0.900"/>
<path d="M1011.0,670.5h9l-4.5,5z" fill="#444"/>
<path d="M1012.0,688.5 l3.5,-3.500 3.500,3.500z M1012.0,692.0 l3.5,-3.500 3.500,3.500z" fill="#2a6cf0"/>
<circle cx="1015.5" cy="704.5" r="3" fill="#d8dde6" stroke="#666" stroke-width="1"/>
<path d="M1012.0,717.5 l3.5,3.500 3.500,-3.500z M1012.0,721.0 l3.5,3.500 3.500,-3.500z" fill="#2a6cf0"/>
<text x="1029" y="151.5" font-size="11" fill="#222" font-family='"Liberation Sans", sans-serif' font-weight="bold" textLength="59" lengthAdjust="spacing">Navigation</text>
<path d="M1200.0,145.0h7l-3.5,4z" fill="#222"/>
<path d="M1215.500,143.500 l7,7 M1222.500,143.500 l-7,7" stroke="#333" stroke-width="1.900"/>
<text x="1035" y="176.5" font-size="11" fill="#8a8080" font-family='"Liberation Sans", sans-serif' textLength="90" lengthAdjust="spacing">Search Document</text>
<circle cx="1200" cy="170.500" r="3.800" fill="#fff" stroke="#2a62c0" stroke-width="1.700"/><path d="M1197.500,173.500 l-4.500,4.500" stroke="#1f3f90" stroke-width="2"/>
<path d="M1213.0,171.0h5l-2.5,3z" fill="#6a6a6a"/>
<rect x="1041.500" y="197.500" width="8" height="14" fill="#fff" stroke="#4a5f9a"/><path d="M1044,200.500 h4 M1045,203 h3 M1044,205.500 h4 M1045,208 h3" stroke="#667" stroke-width="0.800"/>
<rect x="1065.5" y="197.5" width="4.500" height="5" fill="#fff" stroke="#4a5f9a" stroke-width="0.900"/>
<rect x="1065.5" y="206.0" width="4.500" height="5" fill="#fff" stroke="#4a5f9a" stroke-width="0.900"/>
<rect x="1073.5" y="197.5" width="4.500" height="5" fill="#fff" stroke="#4a5f9a" stroke-width="0.900"/>
<rect x="1073.5" y="206.0" width="4.500" height="5" fill="#fff" stroke="#4a5f9a" stroke-width="0.900"/>
<rect x="1091.500" y="197.500" width="12" height="4" fill="#fff" stroke="#4a5f9a"/><rect x="1094" y="198.500" width="6" height="2" fill="#f2b020"/><rect x="1091.500" y="204" width="12" height="7.500" fill="#fff" stroke="#4a5f9a"/><rect x="1096" y="206" width="6" height="3.500" fill="#f2b020"/><path d="M1093,206.500 h3 M1093,209 h3" stroke="#667" stroke-width="0.800"/>
<path d="M1184.0,204.5h9l-4.5,-5z" fill="#a6a6a6"/>
<path d="M1206.0,200.5h9l-4.5,5z" fill="#a6a6a6"/>
<text x="1054" y="248.8" font-size="11" fill="#444" font-family='"Liberation Sans", sans-serif' textLength="123.5" lengthAdjust="spacing">This document does not</text>
<text x="1054" y="262" font-size="11" fill="#444" font-family='"Liberation Sans", sans-serif' textLength="92.5" lengthAdjust="spacing">contain headings.</text>
<text x="1054" y="287.9" font-size="11" fill="#444" font-family='"Liberation Sans", sans-serif' textLength="131.8" lengthAdjust="spacing">To create navigation tabs,</text>
<text x="1054" y="300.9" font-size="11" fill="#444" font-family='"Liberation Sans", sans-serif' textLength="120.8" lengthAdjust="spacing">create headings in your</text>
<text x="1054" y="313.9" font-size="11" fill="#444" font-family='"Liberation Sans", sans-serif' textLength="114.8" lengthAdjust="spacing">document by applying</text>
<text x="1054" y="326.9" font-size="11" fill="#444" font-family='"Liberation Sans", sans-serif' textLength="79" lengthAdjust="spacing">Heading Styles.</text>
<clipPath id="cpimg"><rect x="1412" y="141" width="500" height="241"/></clipPath>
<g clip-path="url(#cpimg)"><circle cx="1469" cy="144.2" r="21.8" fill="#f3ecd0" stroke="#d8c888" stroke-width="0.8"/><circle cx="1469" cy="144.2" r="19.6" fill="none" stroke="#8a8468" stroke-width="2.6" stroke-dasharray="1.1,1.3" opacity="0.55"/><circle cx="1469" cy="144.2" r="16.6" fill="#f0e8c8" stroke="#6aa0c4" stroke-width="1.3"/><path d="M1457,138 h24 v13 q-1,5.500 -12,8.600 q-11,-3.100 -12,-8.600z" fill="#7c7a22" stroke="#a89a48" stroke-width="0.6"/><rect x="1463" y="139" width="13" height="5.500" fill="#f4efe0"/><path d="M1460.500,149.500 q5,1 8.500,5 q3.500,-4 8.500,-5 q-4,4 -8.500,7 q-4.500,-3 -8.500,-7z" fill="#f0ece0"/><path d="M1469,146 l0.900,1.900 2,0.200 -1.500,1.400 0.400,2 -1.800,-1 -1.800,1 0.400,-2 -1.500,-1.400 2,-0.200z" fill="#e8b838"/></g>
<text x="1609" y="150.6" font-size="13.5" fill="#eadfd6" font-family='"Liberation Serif", serif' textLength="90" lengthAdjust="spacingAndGlyphs">DIARY SURVEY</text>
<g clip-path="url(#cpimg)"><rect x="1753.300" y="141" width="15" height="23" fill="#3f6a18"/><rect x="1768" y="141" width="18.500" height="23.500" fill="#8c3418"/><circle cx="1758.7" cy="144.8" r="1.900" fill="#6fb02c"/><circle cx="1755.1" cy="159.6" r="1.900" fill="#8fcf3c"/><circle cx="1759.3" cy="142.8" r="1.900" fill="#6fb02c"/><circle cx="1757.3" cy="143.4" r="1.900" fill="#a6dc58"/><circle cx="1755.4" cy="143.5" r="1.900" fill="#a6dc58"/><circle cx="1755.3" cy="153.9" r="1.900" fill="#8fcf3c"/><circle cx="1762.7" cy="154.3" r="1.900" fill="#8fcf3c"/><circle cx="1762.0" cy="150.2" r="1.900" fill="#8fcf3c"/><circle cx="1755.1" cy="160.4" r="1.900" fill="#a6dc58"/><circle cx="1759.9" cy="153.4" r="1.900" fill="#6fb02c"/><circle cx="1758.5" cy="159.5" r="1.900" fill="#8fcf3c"/><circle cx="1755.8" cy="154.1" r="1.900" fill="#8fcf3c"/><circle cx="1759.3" cy="153.6" r="1.900" fill="#8fcf3c"/><circle cx="1761.8" cy="155.1" r="1.900" fill="#a6dc58"/><circle cx="1763.3" cy="150.9" r="1.900" fill="#a6dc58"/><circle cx="1760.6" cy="161.8" r="1.900" fill="#a6dc58"/><circle cx="1758.4" cy="159.0" r="1.900" fill="#6fb02c"/><circle cx="1764.6" cy="143.3" r="1.900" fill="#a6dc58"/><circle cx="1761.3" cy="160.8" r="1.900" fill="#6fb02c"/><circle cx="1760.3" cy="154.9" r="1.900" fill="#8fcf3c"/><circle cx="1756.0" cy="150.7" r="1.900" fill="#a6dc58"/><circle cx="1756.5" cy="152.3" r="1.900" fill="#8fcf3c"/><circle cx="1767.0" cy="143.2" r="1.900" fill="#6fb02c"/><circle cx="1761.9" cy="160.8" r="1.900" fill="#a6dc58"/><circle cx="1758.9" cy="149.2" r="1.900" fill="#a6dc58"/><circle cx="1762.0" cy="151.5" r="1.900" fill="#8fcf3c"/><circle cx="1766.8" cy="151.9" r="1.900" fill="#6fb02c"/><circle cx="1755.3" cy="157.6" r="1.900" fill="#a6dc58"/><circle cx="1762.9" cy="163.3" r="1.900" fill="#a6dc58"/><circle cx="1758.2" cy="150.0" r="1.900" fill="#6fb02c"/><circle cx="1759.0" cy="162.2" r="1.900" fill="#a6dc58"/><circle cx="1756.7" cy="144.1" r="1.900" fill="#8fcf3c"/><circle cx="1757.3" cy="147.8" r="1.900" fill="#6fb02c"/><circle cx="1757.7" cy="150.1" r="1.900" fill="#a6dc58"/><circle cx="1770.3" cy="151.4" r="1.900" fill="#d84830"/><circle cx="1783.1" cy="159.5" r="1.900" fill="#d84830"/><circle cx="1780.3" cy="163.2" r="1.900" fill="#f0b060"/><circle cx="1784.3" cy="144.8" r="1.900" fill="#f09058"/><circle cx="1771.4" cy="156.0" r="1.900" fill="#e0643c"/><circle cx="1776.8" cy="154.5" r="1.900" fill="#d84830"/><circle cx="1773.5" cy="144.7" r="1.900" fill="#d84830"/><circle cx="1778.8" cy="148.5" r="1.900" fill="#f09058"/><circle cx="1780.0" cy="152.8" r="1.900" fill="#e0643c"/><circle cx="1776.3" cy="160.7" r="1.900" fill="#f0b060"/><circle cx="1775.4" cy="150.2" r="1.900" fill="#f0b060"/><circle cx="1779.1" cy="142.9" r="1.900" fill="#e0643c"/><circle cx="1784.8" cy="151.2" r="1.900" fill="#e0643c"/><circle cx="1774.4" cy="142.7" r="1.900" fill="#e0643c"/><circle cx="1778.1" cy="153.3" r="1.900" fill="#d84830"/><circle cx="1778.8" cy="143.0" r="1.900" fill="#f09058"/><circle cx="1778.8" cy="144.8" r="1.900" fill="#d84830"/><circle cx="1784.3" cy="154.8" r="1.900" fill="#f0b060"/><circle cx="1771.0" cy="160.2" r="1.900" fill="#f0b060"/><circle cx="1776.7" cy="148.4" r="1.900" fill="#f09058"/><circle cx="1770.6" cy="149.0" r="1.900" fill="#d84830"/><circle cx="1776.7" cy="156.7" r="1.900" fill="#e0643c"/><circle cx="1772.3" cy="162.4" r="1.900" fill="#d84830"/><circle cx="1771.3" cy="153.4" r="1.900" fill="#e0643c"/><circle cx="1781.1" cy="148.1" r="1.900" fill="#e0643c"/><circle cx="1780.1" cy="147.2" r="1.900" fill="#d84830"/><circle cx="1783.5" cy="149.3" r="1.900" fill="#f09058"/><circle cx="1777.5" cy="158.6" r="1.900" fill="#d84830"/><circle cx="1779.2" cy="155.0" r="1.900" fill="#f09058"/><circle cx="1781.9" cy="159.5" r="1.900" fill="#f09058"/><circle cx="1772.2" cy="152.3" r="1.900" fill="#e0643c"/><circle cx="1784.8" cy="158.9" r="1.900" fill="#f0b060"/><circle cx="1773.1" cy="156.7" r="1.900" fill="#d84830"/><circle cx="1776.2" cy="162.1" r="1.900" fill="#d84830"/><circle cx="1784.3" cy="149.5" r="1.900" fill="#f09058"/><circle cx="1770.6" cy="151.8" r="1.900" fill="#d84830"/><circle cx="1772.3" cy="155.2" r="1.900" fill="#e0643c"/><circle cx="1776.7" cy="155.9" r="1.900" fill="#e0643c"/><circle cx="1782.4" cy="144.1" r="1.900" fill="#f0b060"/><circle cx="1781.5" cy="158.0" r="1.900" fill="#f0b060"/><circle cx="1783.2" cy="151.0" r="1.900" fill="#d84830"/><circle cx="1770.4" cy="162.3" r="1.900" fill="#f0b060"/><circle cx="1776.4" cy="157.9" r="1.900" fill="#e0643c"/><circle cx="1780.6" cy="145.2" r="1.900" fill="#f09058"/><path d="M1780,160 l6.500,-5 v9.500 h-6z" fill="#5a7a1c"/><rect x="1783" y="150.500" width="32.400" height="28" fill="#e9e6f2"/><path d="M1787,150.500 h16 l12,6 v6 l-20,-12z" fill="#6a9ad0"/><path d="M1790,151 l25,14 v4 l-28,-16z" fill="#58b090"/><path d="M1788,178.500 l10,-20 l17,9 l-8,11z" fill="#f0b428"/><path d="M1790.0,178.500 l9,-17" stroke="#d88a18" stroke-width="0.900"/><path d="M1793.5,178.500 l9,-17" stroke="#d88a18" stroke-width="0.900"/><path d="M1797.0,178.500 l9,-17" stroke="#d88a18" stroke-width="0.900"/><path d="M1800.5,178.500 l9,-17" stroke="#d88a18" stroke-width="0.900"/><path d="M1804.0,178.500 l9,-17" stroke="#d88a18" stroke-width="0.900"/><path d="M1794,155 l21,11.500 l-2.500,4.500 l-21,-12z" fill="#2a2260"/><path d="M1807,170 l8,-2 v10.500 h-10z" fill="#e8a050"/><rect x="1810" y="141" width="32.700" height="17.300" fill="#efe6e2"/><ellipse cx="1822" cy="142" rx="9" ry="6.500" fill="#b8661c"/><ellipse cx="1829" cy="143" rx="5" ry="4.500" fill="#e8c030"/><rect x="1826" y="141" width="3" height="7" fill="#3a2a1a"/><circle cx="1821.6" cy="154.4" r="1.500" fill="#d8b830"/><circle cx="1837.1" cy="151.1" r="1.500" fill="#f0e070"/><circle cx="1840.6" cy="154.9" r="1.500" fill="#d8b830"/><circle cx="1824.1" cy="154.1" r="1.500" fill="#e8d048"/><circle cx="1821.3" cy="157.3" r="1.500" fill="#f0e070"/><circle cx="1823.1" cy="155.6" r="1.500" fill="#e8d048"/><circle cx="1829.7" cy="156.5" r="1.500" fill="#e8d048"/><circle cx="1821.6" cy="151.6" r="1.500" fill="#f0e070"/><circle cx="1825.8" cy="154.4" r="1.500" fill="#d8b830"/><circle cx="1831.9" cy="156.3" r="1.500" fill="#e8d048"/><circle cx="1839.2" cy="152.7" r="1.500" fill="#d8b830"/><circle cx="1834.2" cy="156.1" r="1.500" fill="#f0e070"/><circle cx="1829.4" cy="156.9" r="1.500" fill="#f0e070"/><circle cx="1823.6" cy="151.1" r="1.500" fill="#f0e070"/><circle cx="1821.4" cy="153.3" r="1.500" fill="#e8d048"/><circle cx="1833.2" cy="155.8" r="1.500" fill="#e8d048"/><circle cx="1824.4" cy="153.6" r="1.500" fill="#f0e070"/><circle cx="1823.4" cy="150.5" r="1.500" fill="#f0e070"/><circle cx="1831.4" cy="154.2" r="1.500" fill="#e8d048"/><circle cx="1838.7" cy="150.4" r="1.500" fill="#e8d048"/><circle cx="1826.5" cy="155.8" r="1.500" fill="#f0e070"/><circle cx="1830.0" cy="150.2" r="1.500" fill="#e8d048"/><circle cx="1829.9" cy="154.6" r="1.500" fill="#f0e070"/><circle cx="1833.1" cy="151.5" r="1.500" fill="#d8b830"/><circle cx="1830.0" cy="154.0" r="1.500" fill="#d8b830"/><circle cx="1831.2" cy="151.9" r="1.500" fill="#f0e070"/><rect x="1835" y="141" width="7.700" height="8" fill="#c8c8cc"/><rect x="1830" y="150.500" width="33.400" height="27" fill="#aeb0c2"/><rect x="1838" y="156" width="16" height="21.500" fill="#c6c8d4"/><rect x="1849" y="151" width="8" height="8" rx="1.500" fill="#d8d8e0"/><rect x="1849.500" y="155" width="7" height="4.500" fill="#4a4a58"/><rect x="1830.500" y="160" width="7" height="17" rx="2" fill="#5a5c70"/><rect x="1831" y="170" width="6" height="7" fill="#2c2c38"/><rect x="1853" y="162" width="10" height="14.500" rx="2.500" fill="#b04a60"/><rect x="1854" y="163.500" width="8" height="4" fill="#6a5a70"/><rect x="1855" y="171.500" width="2" height="1.500" fill="#f8f0d0"/><rect x="1847" y="150.500" width="1.500" height="6" fill="#3a3a48"/><rect x="1860" y="151" width="2" height="7" fill="#3a3a48"/><rect x="1843" y="141" width="27" height="3.600" fill="#4a3038"/><rect x="1848" y="141.500" width="6" height="2.500" fill="#c8a878"/><rect x="1863" y="141.500" width="6" height="2.500" fill="#5a6a9a"/></g>
<text x="1457" y="191.5" font-size="6.3" fill="#fff" font-family='"DejaVu Sans", "Liberation Sans", sans-serif' font-weight="bold" textLength="43" lengthAdjust="spacing">Instructions</text>
<text x="1566" y="191.5" font-size="6.3" fill="#fff" font-family='"DejaVu Sans", "Liberation Sans", sans-serif' font-weight="bold" textLength="61" lengthAdjust="spacing">Summary Screen</text>
<text x="1673" y="191.5" font-size="6.3" fill="#fff" font-family='"DejaVu Sans", "Liberation Sans", sans-serif' font-weight="bold" textLength="83" lengthAdjust="spacing">Review/Print Expenses</text>
<text x="1802.5" y="191.5" font-size="6.3" fill="#fff" font-family='"DejaVu Sans", "Liberation Sans", sans-serif' font-weight="bold" textLength="61.5" lengthAdjust="spacingAndGlyphs">About the Survey</text>
<text x="1853.5" y="211.3" font-size="6.3" fill="#2222dd" font-family='"DejaVu Sans", "Liberation Sans", sans-serif' font-weight="bold" textLength="24" lengthAdjust="spacingAndGlyphs">Logout</text>
<text x="1424.5" y="223.6" font-size="9" fill="#8b1a1a" font-family='"DejaVu Sans", "Liberation Sans", sans-serif' font-weight="bold" textLength="296.5" lengthAdjust="spacingAndGlyphs">Please report expenses for these people in your household:</text>
<text x="1424.5" y="236" font-size="9" fill="#8b1a1a" font-family='"DejaVu Sans", "Liberation Sans", sans-serif' font-weight="bold" textLength="44.5" lengthAdjust="spacingAndGlyphs">Kathleen</text>
<text x="1529" y="236" font-size="9" fill="#8b1a1a" font-family='"DejaVu Sans", "Liberation Sans", sans-serif' font-weight="bold" textLength="49" lengthAdjust="spacingAndGlyphs">, Nicholas</text>
<text x="1640" y="236" font-size="9" fill="#8b1a1a" font-family='"DejaVu Sans", "Liberation Sans", sans-serif' font-weight="bold" textLength="54" lengthAdjust="spacingAndGlyphs">, Nathaniel</text>
<text x="1434" y="252.7" font-size="5.8" fill="#111" font-family='"DejaVu Sans", "Liberation Sans", sans-serif' font-weight="bold" textLength="33" lengthAdjust="spacingAndGlyphs">Examples:</text>
<circle cx="1439" cy="265.7" r="0.900" fill="#333"/>
<text x="1445" y="267.5" font-size="5.6" fill="#2a2a2a" font-family='"DejaVu Sans", "Liberation Sans", sans-serif'>eggs</text>
<circle cx="1439" cy="273.59999999999997" r="0.900" fill="#333"/>
<text x="1445" y="275.4" font-size="5.6" fill="#2a2a2a" font-family='"DejaVu Sans", "Liberation Sans", sans-serif'>whole milk</text>
<circle cx="1439" cy="281.5" r="0.900" fill="#333"/>
<text x="1445" y="283.3" font-size="5.6" fill="#2a2a2a" font-family='"DejaVu Sans", "Liberation Sans", sans-serif'>sugar</text>
<circle cx="1484" cy="265.7" r="0.900" fill="#333"/>
<text x="1490" y="267.5" font-size="5.6" fill="#2a2a2a" font-family='"DejaVu Sans", "Liberation Sans", sans-serif'>cereal</text>
<circle cx="1484" cy="273.59999999999997" r="0.900" fill="#333"/>
<text x="1490" y="275.4" font-size="5.6" fill="#2a2a2a" font-family='"DejaVu Sans", "Liberation Sans", sans-serif'>white bread</text>
<circle cx="1484" cy="281.5" r="0.900" fill="#333"/>
<text x="1490" y="283.3" font-size="5.6" fill="#2a2a2a" font-family='"DejaVu Sans", "Liberation Sans", sans-serif'>cooking oil</text>
<circle cx="1533" cy="265.7" r="0.900" fill="#333"/>
<text x="1539" y="267.5" font-size="5.6" fill="#2a2a2a" font-family='"DejaVu Sans", "Liberation Sans", sans-serif'>tea</text>
<circle cx="1533" cy="273.59999999999997" r="0.900" fill="#333"/>
<text x="1539" y="275.4" font-size="5.6" fill="#2a2a2a" font-family='"DejaVu Sans", "Liberation Sans", sans-serif'>cola</text>
<circle cx="1533" cy="281.5" r="0.900" fill="#333"/>
<text x="1539" y="283.3" font-size="5.6" fill="#2a2a2a" font-family='"DejaVu Sans", "Liberation Sans", sans-serif'>ground coffee</text>
<circle cx="1587" cy="265.7" r="0.900" fill="#333"/>
<text x="1593" y="267.5" font-size="5.6" fill="#2a2a2a" font-family='"DejaVu Sans", "Liberation Sans", sans-serif'>beer</text>
<circle cx="1587" cy="273.59999999999997" r="0.900" fill="#333"/>
<text x="1593" y="275.4" font-size="5.6" fill="#2a2a2a" font-family='"DejaVu Sans", "Liberation Sans", sans-serif'>liquor</text>
<circle cx="1587" cy="281.5" r="0.900" fill="#333"/>
<text x="1593" y="283.3" font-size="5.6" fill="#2a2a2a" font-family='"DejaVu Sans", "Liberation Sans", sans-serif'>oranges</text>
<circle cx="1625" cy="265.7" r="0.900" fill="#333"/>
<text x="1631" y="267.5" font-size="5.6" fill="#2a2a2a" font-family='"DejaVu Sans", "Liberation Sans", sans-serif'>apple juice</text>
<circle cx="1625" cy="273.59999999999997" r="0.900" fill="#333"/>
<text x="1631" y="275.4" font-size="5.6" fill="#2a2a2a" font-family='"DejaVu Sans", "Liberation Sans", sans-serif'>tomato juice</text>
<circle cx="1625" cy="281.5" r="0.900" fill="#333"/>
<text x="1631" y="283.3" font-size="5.6" fill="#2a2a2a" font-family='"DejaVu Sans", "Liberation Sans", sans-serif'>carbonated water</text>
<circle cx="1689" cy="265.7" r="0.900" fill="#333"/>
<text x="1695" y="267.5" font-size="5.6" fill="#2a2a2a" font-family='"DejaVu Sans", "Liberation Sans", sans-serif'>ground beef</text>
<circle cx="1689" cy="273.59999999999997" r="0.900" fill="#333"/>
<text x="1695" y="275.4" font-size="5.6" fill="#2a2a2a" font-family='"DejaVu Sans", "Liberation Sans", sans-serif'>tomato juice</text>
<circle cx="1689" cy="281.5" r="0.900" fill="#333"/>
<text x="1695" y="283.3" font-size="5.6" fill="#2a2a2a" font-family='"DejaVu Sans", "Liberation Sans", sans-serif'>carbonated water</text>
<circle cx="1754" cy="265.7" r="0.900" fill="#333"/>
<text x="1760" y="267.5" font-size="5.6" fill="#2a2a2a" font-family='"DejaVu Sans", "Liberation Sans", sans-serif'>chicken parts</text>
<circle cx="1754" cy="273.59999999999997" r="0.900" fill="#333"/>
<text x="1760" y="275.4" font-size="5.6" fill="#2a2a2a" font-family='"DejaVu Sans", "Liberation Sans", sans-serif'>whole chicken</text>
<circle cx="1754" cy="281.5" r="0.900" fill="#333"/>
<text x="1760" y="283.3" font-size="5.6" fill="#2a2a2a" font-family='"DejaVu Sans", "Liberation Sans", sans-serif'>baby food</text>
<circle cx="1809" cy="265.7" r="0.900" fill="#333"/>
<text x="1815" y="267.5" font-size="5.6" fill="#2a2a2a" font-family='"DejaVu Sans", "Liberation Sans", sans-serif'>fish</text>
<circle cx="1809" cy="273.59999999999997" r="0.900" fill="#333"/>
<text x="1815" y="275.4" font-size="5.6" fill="#2a2a2a" font-family='"DejaVu Sans", "Liberation Sans", sans-serif'>shellfish</text>
<circle cx="1809" cy="281.5" r="0.900" fill="#333"/>
<text x="1815" y="283.3" font-size="5.6" fill="#2a2a2a" font-family='"DejaVu Sans", "Liberation Sans", sans-serif'>pet food</text>
<text x="1430" y="315.5" font-size="6.3" fill="#333" font-family='"Liberation Sans", sans-serif' textLength="97" lengthAdjust="spacing">Food and Drink Away from Home</text>
<text x="1540" y="315.5" font-size="6.3" fill="#f0e0e0" font-family='"Liberation Sans", sans-serif' textLength="121" lengthAdjust="spacing">Food and Drink for Home Consumption</text>
<text x="1678.5" y="315.5" font-size="6.3" fill="#333" font-family='"Liberation Sans", sans-serif' textLength="100" lengthAdjust="spacing">Clothing, Shoes, Jewelry, and Acc.</text>
<text x="1800.5" y="315.5" font-size="6.3" fill="#333" font-family='"Liberation Sans", sans-serif' textLength="80.5" lengthAdjust="spacing">All Other Products/Services</text>
<text x="1461" y="349" font-size="5.6" fill="#1a1ad8" font-family='"DejaVu Sans", "Liberation Sans", sans-serif' font-weight="bold" textLength="92.5" lengthAdjust="spacing">What did you buy or pay for?</text>
<text x="1605.6" y="349" font-size="5.6" fill="#1a1ad8" font-family='"DejaVu Sans", "Liberation Sans", sans-serif' font-weight="bold" textLength="39" lengthAdjust="spacing">Is this item?</text>
<text x="1685" y="343.6" font-size="5.6" fill="#1a1ad8" font-family='"DejaVu Sans", "Liberation Sans", sans-serif' font-weight="bold" text-anchor="middle">Total Cost</text>
<text x="1685" y="352.6" font-size="5.6" fill="#1a1ad8" font-family='"DejaVu Sans", "Liberation Sans", sans-serif' font-weight="bold" text-anchor="middle">without tax</text>
<text x="1756" y="335.8" font-size="5.6" fill="#1a1ad8" font-family='"DejaVu Sans", "Liberation Sans", sans-serif' font-weight="bold" text-anchor="middle">Check here if</text>
<text x="1756" y="344.7" font-size="5.6" fill="#1a1ad8" font-family='"DejaVu Sans", "Liberation Sans", sans-serif' font-weight="bold" text-anchor="middle">purchased for</text>
<text x="1756" y="353.5" font-size="5.6" fill="#1a1ad8" font-family='"DejaVu Sans", "Liberation Sans", sans-serif' font-weight="bold" text-anchor="middle">someone not in</text>
<text x="1756" y="362" font-size="5.6" fill="#1a1ad8" font-family='"DejaVu Sans", "Liberation Sans", sans-serif' font-weight="bold" text-anchor="middle">household</text>
<text x="1829" y="343.6" font-size="5.6" fill="#1a1ad8" font-family='"DejaVu Sans", "Liberation Sans", sans-serif' font-weight="bold" text-anchor="middle">Date</text>
<text x="1829" y="352.6" font-size="5.6" fill="#1a1ad8" font-family='"DejaVu Sans", "Liberation Sans", sans-serif' font-weight="bold" text-anchor="middle">Purchased</text>
<text x="1865" y="349" font-size="5.6" fill="#1a1ad8" font-family='"DejaVu Sans", "Liberation Sans", sans-serif' font-weight="bold" textLength="17" lengthAdjust="spacing">Clear</text>
<path d="M1904.5,359.75h4l-2.0,2.5z" fill="#000"/>
<text x="1414.5" y="372.8" font-size="5.3" fill="#222" font-family='"Liberation Sans", sans-serif' textLength="12.5" lengthAdjust="spacingAndGlyphs">Done</text>
<clipPath id="cpfr"><rect x="1412" y="377" width="500" height="5"/></clipPath>
<circle cx="1522" cy="377.500" r="3.500" fill="#4a80d8" clip-path="url(#cpfr)"/>
<g clip-path='url(#cpfr)'><text x='1529' y='378.800' font-size='5.200' fill='#2a2ab0' font-family='"Liberation Sans", sans-serif' textLength='66' lengthAdjust='spacingAndGlyphs'>Which file do I want to save?</text></g>
<text x="1497" y="405.6" font-size="12" fill="#4f81bd" font-family='"Liberation Serif", serif' font-weight="bold" textLength="331" lengthAdjust="spacing">Figure 4: Food and Drink for Home Consumption (No Scrolling)</text>
<rect x="2036" y="139" width="8" height="2" fill="#8a8f98"/>
<g transform="translate(2034.5,144.5)"><rect x="0.500" y="1.500" width="11" height="8.500" fill="#f1dfe7" stroke="#5a5a62" stroke-width="1"/><rect x="2" y="0.500" width="3" height="3" fill="#fff" stroke="#5a5a62" stroke-width="0.900"/><rect x="4.500" y="7.500" width="4" height="5" fill="#fff" stroke="#5a5a62" stroke-width="0.900"/><path d="M3,4.500 l2,2 M7,6 l2,-2" stroke="#5a5a62" stroke-width="0.800"/></g>
<path d="M2035.5,169.5h9l-4.5,-5z" fill="#444"/>
<path d="M2037,445.500 h6 M2037,447.500 h6 M2037,449.500 h6 M2037,451.500 h6" stroke="#777" stroke-width="0.900"/>
<path d="M2035.5,618.0h9l-4.5,5z" fill="#444"/>
<path d="M2036.5,635.5 l3.5,-3.500 3.500,3.500z M2036.5,639.0 l3.5,-3.500 3.500,3.500z" fill="#2a6cf0"/>
<circle cx="2040" cy="651.5" r="3" fill="#d8dde6" stroke="#666" stroke-width="1"/>
<path d="M2036.5,664.5 l3.5,3.500 3.500,-3.500z M2036.5,668.0 l3.5,3.500 3.500,-3.500z" fill="#2a6cf0"/>
<path d="M1241.0,679.5v9l-5,-4.5z" fill="#444"/>
<path d="M1600.500,681 v6 M1602.500,681 v6 M1604.500,681 v6 M1606.500,681 v6" stroke="#777" stroke-width="0.900"/>
<path d="M2022.0,679.5v9l5,-4.5z" fill="#444"/>
<text x="1032" y="706.6" font-size="11" fill="#44485a" font-family='"Liberation Sans", sans-serif' textLength="59" lengthAdjust="spacingAndGlyphs">Page: 3 of 3</text>
<text x="1111" y="706.6" font-size="11" fill="#44485a" font-family='"Liberation Sans", sans-serif' textLength="51.5" lengthAdjust="spacing">Words: 42</text>
<g transform="translate(1181,695)"><path d="M0,10 l8,-4 8,3 -8,5z" fill="#e8eefa" stroke="#4a6ab8" stroke-width="0.900"/><path d="M0,10 v2 l8,4 8,-5 v-2" fill="#5a7fd0" stroke="#3a5aa8" stroke-width="0.600"/><path d="M6,5 l3,4 7,-9" stroke="#3a6fe0" stroke-width="2" fill="none"/></g>
<rect x="1778.5" y="697.5" width="10" height="11" fill="#fff" stroke="#555"/><path d="M1780.5,700.5 h6 M1780.5,702.5 h6 M1780.5,704.5 h6 M1780.5,706.5 h6" stroke="#555" stroke-width="0.800"/>
<path d="M1798,698.5 h5 v9 h-5z M1803,698.5 h5 v9 h-5z" fill="#fff" stroke="#555" stroke-width="0.900"/><path d="M1799.5,701 h2.500 M1799.5,703 h2.500 M1799.5,705 h2.500 M1804.5,701 h2.500 M1804.5,703 h2.500 M1804.5,705 h2.500" stroke="#666" stroke-width="0.700"/>
<rect x="1815" y="697.5" width="9" height="8" fill="#fff" stroke="#555" stroke-width="0.900"/><path d="M1816.5,700 h6 M1816.5,702 h6" stroke="#666" stroke-width="0.700"/><circle cx="1824" cy="706" r="3.200" fill="#3a7fd0"/><path d="M1822,706 q2,-2.500 4,0" stroke="#5ab04a" stroke-width="1.300" fill="none"/>
<path d="M1834,699 h2 M1837,699 h7 M1837,702 h2 M1840,702 h4 M1837,705 h2 M1840,705 h4 M1834,708 h2 M1837,708 h7" stroke="#666" stroke-width="1"/>
<path d="M1853,698.5 h10 M1853,701 h10 M1853,703.5 h10 M1853,706 h10 M1853,708.5 h10" stroke="#555" stroke-width="1"/>
<text x="1877" y="706.6" font-size="11" fill="#44485a" font-family='"Liberation Sans", sans-serif' textLength="26.5" lengthAdjust="spacingAndGlyphs">100%</text>
<path d="M1927.5,703.5 H2027.5" stroke="#8a909c" stroke-width="1"/><path d="M1927.5,704.5 H2027.5" stroke="#f4f6f8" stroke-width="1"/>
<circle cx="1919.5" cy="703.5" r="7" fill="#f4f5f8" stroke="#7a808c" stroke-width="1"/><rect x="1916.0" y="702.5" width="7" height="2" fill="#555"/>
<circle cx="2035.5" cy="703.5" r="7" fill="#f4f5f8" stroke="#7a808c" stroke-width="1"/><rect x="2032.0" y="702.5" width="7" height="2" fill="#555"/><rect x="2034.5" y="700.0" width="2" height="7" fill="#555"/>
<path d="M1974.5,697.5 h8 v8 l-4,4 -4,-4z" fill="#f2f3f6" stroke="#7a808c" stroke-width="0.900"/>
<g transform="translate(1029,721)"><path d="M1,3 q3,-2 6,0 l-1,5 q-3,-2 -6,0z" fill="#e8542a"/><path d="M8,3.500 q3,2 6,0 l-1,5 q-3,2 -6,0z" fill="#6ab83a"/><path d="M-0.500,9.500 q3,-2 6,0 l-1,5 q-3,-2 -6,0z" fill="#3a7ad8"/><path d="M6.500,10 q3,2 6,0 l-1,5 q-3,2 -6,0z" fill="#f2c020"/></g>
<text x="1045.5" y="733" font-size="11" fill="#000" font-family='"Liberation Sans", sans-serif' font-weight="bold" textLength="28" lengthAdjust="spacing">Start</text>
<g transform="translate(1095,722) scale(1.0)"><circle cx="8" cy="8" r="8" fill="#e8701a"/><circle cx="8.600" cy="6.200" r="5.200" fill="#3b8fe4"/><path d="M6.500,1.200 q3,-0.600 5.200,1.200 q-2,0.200 -2.600,1.600 q1.800,0.200 2.400,1.800 q-1.600,-0.600 -3,0.400 q-0.600,1.600 1,2.600 q-2.400,0.800 -4,-1 q-1.200,-1.600 -0.400,-3.800 q0.600,-1.800 1.400,-2.800z" fill="#f29a1f"/><path d="M0.300,6.500 Q1.500,9.500 4.500,10 Q6.500,12.500 10,12 Q13,11 14.500,7 Q16.500,9 15,12 Q12.500,16 8,16 Q2,15.500 0.300,10Z" fill="#e8701a"/><path d="M1,9 Q3,14.500 8.500,15 Q13.500,14.500 15.300,10 Q13,13 9,13.300 Q4,13 1,9Z" fill="#f5b32a"/></g>
<circle cx="1126" cy="730" r="7.500" fill="#e8eef8" stroke="#3a5ac8" stroke-width="1.600"/><circle cx="1126" cy="730" r="5" fill="#2a4ad0"/><path d="M1124,727 v6 l5,-3z" fill="#fff"/><path d="M1119,727 a8,8 0 0 1 6,-5" stroke="#e84a2a" stroke-width="1.500" fill="none"/><path d="M1133,733 a8,8 0 0 1 -6,5" stroke="#5ab83a" stroke-width="1.500" fill="none"/>
<g transform="translate(1141,722)"><rect x="1" y="1" width="13" height="14" rx="2" fill="#5a9ae8" stroke="#2a5ab8"/><rect x="4" y="4" width="8" height="8" fill="#e8f0fc"/><path d="M6,10 l4,-5" stroke="#2a4a98" stroke-width="1.400"/><path d="M0,4 l3,-3 M0,12 l3,3" stroke="#8ac0f8" stroke-width="1.500"/></g>
<g transform="translate(1165,722)"><path d="M0.500,0.500 h10 l3,3 v12 h-13z" fill="#fff" stroke="#555"/><rect x="2" y="6" width="10" height="7" fill="#1a1a8a"/><rect x="2" y="6" width="10" height="2" fill="#8a8ac8"/><rect x="3.500" y="9.500" width="2" height="2" fill="#e83a3a"/><rect x="6.500" y="9.500" width="2" height="2" fill="#3ac83a"/><rect x="9" y="9.500" width="2" height="2" fill="#e8e83a"/></g>
<g transform="translate(1188,722) scale(1.0)"><path d="M12.800,11.400 A5.200,5.200 0 1 1 13.400,8.300 H4.800" stroke="#2a86e2" stroke-width="3.100" fill="none"/><path d="M12.800,11.400 A5.200,5.200 0 0 1 5,12.400" stroke="#1565c8" stroke-width="3.100" fill="none"/><path d="M2.200,14.600 Q-1.500,10 5.500,4.200 Q12.500,-0.800 15.300,2.400 Q16,4 14.600,6" stroke="#f0b428" stroke-width="1.700" fill="none" stroke-linecap="round"/><path d="M2.200,14.600 Q4,15.800 7,14.400" stroke="#d89a18" stroke-width="1.500" fill="none" stroke-linecap="round"/></g>
<g transform="translate(1210,723)"><rect x="0" y="0" width="16" height="5" fill="#a8a8a8"/><path d="M1,1 l2,3 M4,1 l2,3 M7,1 l2,3 M10,1 l2,3 M13,1 l2,3" stroke="#e8e8e8" stroke-width="1.200"/><path d="M0,5 h16 v9 h-16z" fill="#f0a828"/><path d="M0,14 q5,-8 9,-4 q4,2 7,-3 v7z" fill="#e8882a"/><rect x="0" y="13" width="16" height="1.500" fill="#555"/></g>
<g transform="translate(1097,745)"><rect x="3.500" y="0.500" width="12" height="12" fill="#fff" stroke="#e02020"/><rect x="3.500" y="0.500" width="12" height="3.500" fill="#e02020"/><path d="M7,8 l3,-2.500 3,2.500 -3,2.500z" fill="#fff" stroke="#666" stroke-width="0.800"/><path d="M0,9 h5 v-2 l4,4 -4,4 v-2 h-5z" fill="#3a8ae0" stroke="#1a5ab0" stroke-width="0.600"/></g>
<text x="1116" y="757.5" font-size="11" fill="#000" font-family='"Liberation Sans", sans-serif' textLength="72" lengthAdjust="spacingAndGlyphs">Novell-delive...</text>
<g transform="translate(1202,745) scale(1.0625)"><path d="M12.800,11.400 A5.200,5.200 0 1 1 13.400,8.300 H4.800" stroke="#2a86e2" stroke-width="3.100" fill="none"/><path d="M12.800,11.400 A5.200,5.200 0 0 1 5,12.400" stroke="#1565c8" stroke-width="3.100" fill="none"/><path d="M2.200,14.600 Q-1.500,10 5.500,4.200 Q12.500,-0.800 15.300,2.400 Q16,4 14.600,6" stroke="#f0b428" stroke-width="1.700" fill="none" stroke-linecap="round"/><path d="M2.200,14.600 Q4,15.800 7,14.400" stroke="#d89a18" stroke-width="1.500" fill="none" stroke-linecap="round"/></g>
<text x="1221" y="757.5" font-size="11" fill="#000" font-family='"Liberation Sans", sans-serif' font-weight="bold">5</text>
<text x="1231" y="757.5" font-size="11" fill="#000" font-family='"Liberation Sans", sans-serif' textLength="54" lengthAdjust="spacing">Internet ...</text>
<path d="M1290.5,752.5h5l-2.5,3z" fill="#000"/>
<g transform="translate(1309,746.5) scale(1.0)"><circle cx="8" cy="8" r="8" fill="#e8701a"/><circle cx="8.600" cy="6.200" r="5.200" fill="#3b8fe4"/><path d="M6.500,1.200 q3,-0.600 5.200,1.200 q-2,0.200 -2.600,1.600 q1.800,0.200 2.400,1.800 q-1.600,-0.600 -3,0.400 q-0.600,1.600 1,2.600 q-2.400,0.800 -4,-1 q-1.200,-1.600 -0.400,-3.800 q0.600,-1.800 1.400,-2.800z" fill="#f29a1f"/><path d="M0.300,6.500 Q1.500,9.500 4.500,10 Q6.500,12.500 10,12 Q13,11 14.500,7 Q16.500,9 15,12 Q12.500,16 8,16 Q2,15.500 0.300,10Z" fill="#e8701a"/><path d="M1,9 Q3,14.500 8.500,15 Q13.500,14.500 15.300,10 Q13,13 9,13.300 Q4,13 1,9Z" fill="#f5b32a"/></g>
<text x="1328" y="758.5" font-size="11" fill="#000" font-family='"Liberation Sans", sans-serif' font-weight="bold" textLength="49" lengthAdjust="spacing">3 Firefox</text>
<path d="M1398.5,753.5h5l-2.5,3z" fill="#000"/>
<g transform="translate(1414,745.5) scale(1.0)"><rect x="0.5" y="0.5" width="15" height="15" rx="1" fill="#fdfeff" stroke="#3f6fc2" stroke-width="1"/><rect x="2" y="2" width="12" height="12" fill="#dbe8fa"/><path d="M2.5,4 L4.8,4 L6,10 L7.4,4 L9,4 L10.4,10 L11.6,4 L13.8,4 L11.6,13 L9.4,13 L8.2,8 L7,13 L4.8,13Z" fill="#1c5bc4"/></g>
<text x="1433" y="757.5" font-size="11" fill="#000" font-family='"Liberation Sans", sans-serif' font-weight="bold" textLength="13" lengthAdjust="spacing">10</text>
<text x="1450.5" y="757.5" font-size="11" fill="#000" font-family='"Liberation Sans", sans-serif' textLength="47" lengthAdjust="spacingAndGlyphs">Microso...</text>
<path d="M1503.5,752.5h5l-2.5,3z" fill="#000"/>
<g transform="translate(1520,747)"><path d="M0.500,2 v11 h15 v-9.500 h-8 l-1.500,-2 h-4.500z" fill="#f8d868" stroke="#c8982a"/></g>
<text x="1539" y="757.5" font-size="11" fill="#000" font-family='"Liberation Sans", sans-serif' font-weight="bold">3</text>
<text x="1549" y="757.5" font-size="11" fill="#000" font-family='"Liberation Sans", sans-serif' textLength="56" lengthAdjust="spacingAndGlyphs">Windows ...</text>
<path d="M1609.5,752.5h5l-2.5,3z" fill="#000"/>
<g transform="translate(1627,746)"><path d="M3,0 l3,8 M7,0 v8 M11,0 l-3,8" stroke="#d84a3a" stroke-width="1.600"/><path d="M4,7 h7 l-1,8 h-5z" fill="#e8a848" stroke="#a86a1a" stroke-width="0.700"/><path d="M5,1 l2,6" stroke="#3a7ad8" stroke-width="1.400"/></g>
<text x="1645" y="757.5" font-size="11" fill="#000" font-family='"Liberation Sans", sans-serif' textLength="73" lengthAdjust="spacing">FoodandDrin...</text>
<g transform="translate(1794,746)"><rect width="13" height="13" rx="2.500" fill="#f6b36a"/><path d="M3,6.500 l3.500,-3.500 3.500,3.500 -3.500,3.500z" fill="#3a8ad8"/><path d="M6.500,3 l3.500,3.500 h-3.500z" fill="#8ac0f0"/></g>
<text x="1810" y="757.5" font-size="12" fill="#666" font-family='"Liberation Sans", sans-serif' textLength="42" lengthAdjust="spacingAndGlyphs">copernic</text>
<g transform="translate(1871,723)"><path d="M0.500,0.500 h12 v11 h-3 l1,3.500 -4,-3.500 h-6z" fill="#ffffd8" stroke="#000" stroke-width="1.200"/></g>
<text x="1877.5" y="733.5" font-size="11" fill="#1a1a9a" font-family='"Liberation Sans", sans-serif' font-weight="bold" text-anchor="middle">?</text>
<rect x="1899.500" y="721.500" width="5" height="3.500" fill="#fff" stroke="#000"/><rect x="1897.500" y="723.500" width="5" height="3.500" fill="#fff" stroke="#000"/>
<path d="M1898.5,732.5h5l-2.5,3z" fill="#000"/>
<path d="M1949,740.500 l-3,2.500 3,2.500 M1953,740.500 l-3,2.500 3,2.500" stroke="#000" stroke-width="1.200" fill="none"/>
<path d="M1959,730 q1,-5 8,-4 q7,1 6,7 l1,5 -5,-2 q-4,1 -7,-2z" fill="#30d8e8" stroke="#0a8a98" stroke-width="0.700"/><path d="M1957.500,735 l5,-4 4,4 -5,5z" fill="#f0e020" stroke="#8a8a10" stroke-width="0.600"/>
<path d="M1962.500,743 h7 l4.500,4.500 v7 l-4.500,4.500 h-7 l-4.500,-4.500 v-7z" fill="#0808f0"/><rect x="1958" y="751" width="3" height="1.200" fill="#f0e020"/>
<text x="1987" y="736" font-size="11" fill="#000" font-family='"Liberation Sans", sans-serif' textLength="44" lengthAdjust="spacingAndGlyphs">12:49 PM</text>
<text x="1987" y="755" font-size="11" fill="#000" font-family='"Liberation Sans", sans-serif' textLength="44" lengthAdjust="spacingAndGlyphs">Thursday</text>
<path d="M185.5,730.75h8l-4.0,4.5z" fill="#8a9ad0"/>
<clipPath id="cpb"><rect x="0" y="698" width="1009" height="70"/></clipPath>
<g clip-path="url(#cpb)"><circle cx="222.500" cy="696.500" r="7.500" fill="#4a86e0"/><rect x="221.700" y="699.500" width="1.600" height="1.600" fill="#fff"/></g>
<g clip-path='url(#cpb)'><text x='237' y='701.5' font-size='11' fill='#1a1aa0' font-family='"Liberation Sans", sans-serif' textLength='137' lengthAdjust='spacing'>Which file do I want to save?</text></g>
<text x="407" y="727.5" font-size="11" fill="#333" font-family='"Liberation Sans", sans-serif' textLength="26.5" lengthAdjust="spacingAndGlyphs">Close</text>
<path d="M461.5,732.0v9l-5,-4.5z" fill="#444"/>
<path d="M703.500,733.500 v6 M705.500,733.500 v6 M707.500,733.500 v6 M709.500,733.500 v6" stroke="#777" stroke-width="0.900"/>
<path d="M998.0,732.0v9l5,-4.5z" fill="#444"/>
<text x="8" y="759.5" font-size="11" fill="#44485a" font-family='"Liberation Sans", sans-serif' textLength="65.5" lengthAdjust="spacing">Page: 1 of 36</text>
<text x="93" y="759.5" font-size="11" fill="#44485a" font-family='"Liberation Sans", sans-serif' textLength="67" lengthAdjust="spacing">Words: 9,552</text>
<g transform="translate(178,749)"><path d="M0,8 l8,-4 8,3 -8,5z" fill="#e8eefa" stroke="#4a6ab8" stroke-width="0.900"/><path d="M0,8 v2 l8,4 8,-5 v-2" fill="#5a7fd0" stroke="#3a5aa8" stroke-width="0.600"/><path d="M7,7 l7,-6 2,2 -7,6z" fill="#f0d8a0" stroke="#a07030" stroke-width="0.600"/><path d="M14,1 l2,2 1,-1.500 -1.500,-1.500z" fill="#e04a3a"/></g>
<rect x="755.5" y="751.0" width="10" height="11" fill="#fff" stroke="#555"/><path d="M757.5,754.0 h6 M757.5,756.0 h6 M757.5,758.0 h6 M757.5,760.0 h6" stroke="#555" stroke-width="0.800"/>
<path d="M775,752.0 h5 v9 h-5z M780,752.0 h5 v9 h-5z" fill="#fff" stroke="#555" stroke-width="0.900"/><path d="M776.5,754.5 h2.500 M776.5,756.5 h2.500 M776.5,758.5 h2.500 M781.5,754.5 h2.500 M781.5,756.5 h2.500 M781.5,758.5 h2.500" stroke="#666" stroke-width="0.700"/>
<rect x="792" y="751.0" width="9" height="8" fill="#fff" stroke="#555" stroke-width="0.900"/><path d="M793.5,753.5 h6 M793.5,755.5 h6" stroke="#666" stroke-width="0.700"/><circle cx="801" cy="759.5" r="3.200" fill="#3a7fd0"/><path d="M799,759.5 q2,-2.500 4,0" stroke="#5ab04a" stroke-width="1.300" fill="none"/>
<path d="M811,752.5 h2 M814,752.5 h7 M814,755.5 h2 M817,755.5 h4 M814,758.5 h2 M817,758.5 h4 M811,761.5 h2 M814,761.5 h7" stroke="#666" stroke-width="1"/>
<path d="M830,752.0 h10 M830,754.5 h10 M830,757.0 h10 M830,759.5 h10 M830,762.0 h10" stroke="#555" stroke-width="1"/>
<text x="852.5" y="759.5" font-size="11" fill="#44485a" font-family='"Liberation Sans", sans-serif' textLength="27.5" lengthAdjust="spacingAndGlyphs">100%</text>
<path d="M903.5,756 H1004" stroke="#8a909c" stroke-width="1"/><path d="M903.5,757 H1004" stroke="#f4f6f8" stroke-width="1"/>
<circle cx="895.5" cy="756" r="7" fill="#f4f5f8" stroke="#7a808c" stroke-width="1"/><rect x="892.0" y="755" width="7" height="2" fill="#555"/>
<circle cx="1012" cy="756" r="7" fill="#f4f5f8" stroke="#7a808c" stroke-width="1"/><rect x="1008.5" y="755" width="7" height="2" fill="#555"/><rect x="1011" y="752.5" width="2" height="7" fill="#555"/>
<path d="M950,750 h8 v8 l-4,4 -4,-4z" fill="#f2f3f6" stroke="#7a808c" stroke-width="0.900"/>
<g transform="translate(1.2000000000000002,-2.8) scale(0.975)"><circle cx="8" cy="8" r="8" fill="#e8701a"/><circle cx="8.600" cy="6.200" r="5.200" fill="#3b8fe4"/><path d="M6.500,1.200 q3,-0.600 5.200,1.200 q-2,0.200 -2.600,1.600 q1.800,0.200 2.400,1.800 q-1.600,-0.600 -3,0.400 q-0.600,1.600 1,2.600 q-2.400,0.800 -4,-1 q-1.200,-1.600 -0.400,-3.800 q0.600,-1.800 1.400,-2.800z" fill="#f29a1f"/><path d="M0.300,6.500 Q1.500,9.500 4.500,10 Q6.500,12.500 10,12 Q13,11 14.500,7 Q16.500,9 15,12 Q12.500,16 8,16 Q2,15.500 0.300,10Z" fill="#e8701a"/><path d="M1,9 Q3,14.500 8.500,15 Q13.500,14.500 15.300,10 Q13,13 9,13.300 Q4,13 1,9Z" fill="#f5b32a"/></g>
<text x="18.4" y="10" font-size="11" fill="#fff" font-family='"Liberation Sans", sans-serif' font-weight="bold" textLength="80.6" lengthAdjust="spacing">Mozilla Firefox</text>
<rect x="957" y="8" width="6" height="2" fill="#000"/>
<rect x="972.5" y="1.500" width="8" height="7.500" fill="none" stroke="#000"/><rect x="972" y="1" width="9" height="2" fill="#000"/>
<path d="M991,2.500 l8,6.500 M999,2.500 l-8,6.500" stroke="#000" stroke-width="1.700" fill="none"/>
<text x="6.5" y="31.7" font-size="11" fill="#000" font-family='"Liberation Sans", sans-serif' textLength="15.75" lengthAdjust="spacingAndGlyphs">File</text>
<rect x="6.5" y="33" width="6" height="1" fill="#000"/>
<text x="38.5" y="31.7" font-size="11" fill="#000" font-family='"Liberation Sans", sans-serif' textLength="17.5" lengthAdjust="spacingAndGlyphs">Edit</text>
<rect x="38.5" y="33" width="6" height="1" fill="#000"/>
<text x="73" y="31.7" font-size="11" fill="#000" font-family='"Liberation Sans", sans-serif' textLength="21" lengthAdjust="spacingAndGlyphs">View</text>
<rect x="73.0" y="33" width="6" height="1" fill="#000"/>
<text x="110.5" y="31.7" font-size="11" fill="#000" font-family='"Liberation Sans", sans-serif' textLength="33.5" lengthAdjust="spacingAndGlyphs">History</text>
<rect x="119.6" y="33" width="6" height="1" fill="#000"/>
<text x="160.5" y="31.7" font-size="11" fill="#000" font-family='"Liberation Sans", sans-serif' textLength="50.5" lengthAdjust="spacingAndGlyphs">Bookmarks</text>
<rect x="160.5" y="33" width="6" height="1" fill="#000"/>
<text x="228" y="31.7" font-size="11" fill="#000" font-family='"Liberation Sans", sans-serif' textLength="24" lengthAdjust="spacingAndGlyphs">Tools</text>
<rect x="228.0" y="33" width="6" height="1" fill="#000"/>
<text x="269" y="31.7" font-size="11" fill="#000" font-family='"Liberation Sans", sans-serif' textLength="20" lengthAdjust="spacingAndGlyphs">Help</text>
<rect x="269.0" y="33" width="6" height="1" fill="#000"/>
<defs><linearGradient id="gb" x1="0" y1="0" x2="0" y2="1"><stop offset="0" stop-color="#93cc8a"/><stop offset="0.45" stop-color="#3f9a3d"/><stop offset="0.55" stop-color="#1f7a24"/><stop offset="0.85" stop-color="#2e8f31"/><stop offset="1" stop-color="#63bb5e"/></linearGradient></defs>
<circle cx="21.1" cy="57.9" r="15.6" fill="url(#gb)" stroke="#2a7a2a" stroke-width="1"/>
<path d="M24.6,51.2 L17.4,57.9 L24.6,64.6" stroke="#fff" stroke-width="3" fill="none" stroke-linejoin="miter"/>
<path d="M48,53.5 L53,58 L48,62.5" stroke="#e4e1dc" stroke-width="2.6" fill="none"/>
<path d="M67.5,56.75h6l-3.0,3.5z" fill="#000"/>
<path d="M103.2,54.6 A6.1,6.1 0 1 0 104.4,61.4" stroke="#2467dc" stroke-width="3.7" fill="none"/><path d="M99.6,57.4 L107,57.600 L106.800,49.800Z" fill="#2a72e4"/>
<path d="M128.300,51.200 L141.700,64.600 M141.700,51.200 L128.300,64.600" stroke="#a5a29a" stroke-width="3.500" fill="none" stroke-linecap="round"/>
<path d="M165,59.500 L171,53.500 L177,59.500 L177,65.500 L165,65.500Z" fill="#eaf3fc" stroke="#7f9fd0" stroke-width="0.900"/><rect x="169.300" y="59.300" width="3.400" height="6" fill="#9a5420"/><path d="M163.300,59.300 L171,51.600 L178.700,59.300" stroke="#d9a01c" stroke-width="4" fill="none" stroke-linejoin="miter" stroke-linecap="round"/><path d="M163.300,59.300 L171,51.600 L178.700,59.300" stroke="#f7cb3a" stroke-width="2.500" fill="none" stroke-linejoin="miter" stroke-linecap="round"/>
<g transform="translate(199,50) scale(1.0)"><rect width="16" height="16" fill="#0f3468"/><path d="M1.800,14 Q0.200,5 10.200,0.800 Q6.400,4.200 5.800,8.600 Q5,12 1.800,14Z" fill="#f4f7fb"/><path d="M4.400,8 Q5.400,3.600 9.200,2 Q6.800,4.600 6.400,8Z" fill="#8fa9cc"/><path d="M5.800,15.600 Q5,9 8.200,6 Q11.400,4.600 13,8.200 L15,10.600 L12.600,10.900 L13.200,15 L10.800,13.600 L9.400,16 L7.800,14Z" fill="#fff"/><path d="M10.200,9 l2.600,1" stroke="#0f3468" stroke-width="0.700"/></g>
<text x="220.6" y="62.5" font-size="11" fill="#fff" font-family='"Liberation Sans", sans-serif' textLength="54.5" lengthAdjust="spacingAndGlyphs">census.gov</text>
<text x="282.5" y="63" font-size="11" fill="#000" font-family='"Liberation Sans", sans-serif' textLength="176" lengthAdjust="spacing">https://respond.census.gov/ced/fdh</text>
<path d="M763.5,50.5 l2.2,5.2 5.6,0.5 -4.3,3.7 1.3,5.5 -4.8,-3 -4.8,3 1.3,-5.5 -4.3,-3.7 5.6,-0.5z" fill="#fbfbfb" stroke="#8e8e8e" stroke-width="1"/>
<path d="M781.5,56.75h6l-3.0,3.5z" fill="#6e6e6e"/>
<g transform="translate(807,50.5)"><rect x="0" y="0" width="16" height="16" rx="2" fill="#fff"/><rect x="7" y="0" width="9" height="7" rx="1" fill="#e0202a"/><rect x="7" y="6" width="9" height="10" rx="2" fill="#1e9a48"/><ellipse cx="4.5" cy="4" rx="2.5" ry="3.5" fill="#2a5fd0"/><path d="M0,6 L5,9 L0,11Z" fill="#2a5fd0"/><ellipse cx="5" cy="13" rx="4" ry="2.6" fill="#f0b020"/><ellipse cx="9" cy="8" rx="2" ry="3" fill="#1e9a48"/></g>
<path d="M826.5,56.75h6l-3.0,3.5z" fill="#6e6e6e"/>
<text x="841" y="63" font-size="11" fill="#777" font-family='"Liberation Sans", sans-serif' textLength="32.5" lengthAdjust="spacingAndGlyphs">Google</text>
<circle cx="989" cy="55.5" r="4.3" fill="#d6ecfb" stroke="#7fa9d0" stroke-width="1.4"/><path d="M986,59 L980.5,64.5" stroke="#d88a3a" stroke-width="2.2" stroke-linecap="round"/>
<g transform="translate(3,82)"><rect width="16" height="16" rx="3" fill="#e8572a"/><path d="M0,3 Q0,0 3,0 L9,0 L3,16 Q0,16 0,13Z" fill="#f39a1e"/><path d="M11,1.5 Q5,4 4.5,10 Q5,14.5 8.5,14.5 Q12,14 12,10.5 Q11.5,7.5 8.5,7.5 Q7.5,7.6 7,8.2 Q8,4.5 12,3Z M8.3,9.3 Q9.8,9.5 9.8,11 Q9.6,12.6 8.3,12.7 Q7,12.5 6.9,11 Q7,9.5 8.3,9.3Z" fill="#fff" fill-rule="evenodd"/></g>
<text x="24" y="94.2" font-size="11" fill="#000" font-family='"Liberation Sans", sans-serif' textLength="110" lengthAdjust="spacingAndGlyphs">6pm.com Shopping Bag</text>
<g transform="translate(143,82)"><path d="M0.5,3 L0.5,15 L15.5,15 L15.5,4.5 L7,4.5 L5.5,2 L1.5,2Z" fill="#a9c9f3" stroke="#5f8fd6" stroke-width="1"/><circle cx="9" cy="8.5" r="2.8" fill="#e6f0fc" stroke="#3a6cc4" stroke-width="1.3"/><path d="M7,10.5 L4,13.5" stroke="#3a6cc4" stroke-width="1.6"/></g>
<text x="164" y="94.2" font-size="11" fill="#000" font-family='"Liberation Sans", sans-serif' textLength="56" lengthAdjust="spacingAndGlyphs">Most Visited</text>
<g transform="translate(229,82)"><path d="M0.5,3 L0.5,15 L15.5,15 L15.5,4.5 L7,4.5 L5.5,2 L1.5,2Z" fill="#fbd65c" stroke="#d9a320" stroke-width="1"/><circle cx="4" cy="12" r="1.3" fill="#f08a1c"/><path d="M3,8.5 A4.5,4.5 0 0 1 7.5,13 M3,6 A7,7 0 0 1 10,13" stroke="#f08a1c" stroke-width="1.3" fill="none"/></g>
<text x="249.5" y="94.2" font-size="11" fill="#000" font-family='"Liberation Sans", sans-serif' textLength="78.5" lengthAdjust="spacingAndGlyphs">Latest Headlines</text>
<g transform="translate(337,82)"><path d="M0,3 L6,3 L6,4.5 L5,4.5 L7.5,8 L10,5.5 L9,5.5 L9,4 L14,4 L14,5.5 L12.5,5.5 L8.5,9.5 L8.5,12 L10,12 L10,13.5 L4,13.5 L4,12 L5.5,12 L5.5,9.5 L1.5,4.5 L0,4.5Z" fill="#e0001a"/><path d="M14,3 L16,3.5 L14.5,9 L13.5,9Z M13,10.5 h1.6 v1.6 h-1.6z" fill="#e0001a"/></g>
<text x="358.5" y="94.2" font-size="11" fill="#000" font-family='"Liberation Sans", sans-serif' textLength="112" lengthAdjust="spacing">Inbox (38865) - Yaho...</text>
<g transform="translate(480,82)"><circle cx="8" cy="8" r="8" fill="#ef7d22"/><path d="M4,3 L11,6 L8,7.5 L12.5,10.5 L5,13 L6.5,9 L3.5,9.5Z" fill="#fff"/><path d="M7,6 l3,1.5 -3,1z" fill="#ef7d22"/></g>
<text x="501.5" y="94.2" font-size="11" fill="#000" font-family='"Liberation Sans", sans-serif' textLength="112.5" lengthAdjust="spacingAndGlyphs">Personal Banking - PN...</text>
<g transform="translate(623.5,82)"><rect width="15.5" height="16" rx="1.5" fill="#fdfdfd" stroke="#c9c6be" stroke-width="0.6"/></g>
<text x="631.3" y="96" font-size="15" fill="#2c9a1e" font-family='"Liberation Sans", sans-serif' text-anchor="middle">$</text>
<text x="643.7" y="94.2" font-size="11" fill="#000" font-family='"Liberation Sans", sans-serif' textLength="70.5" lengthAdjust="spacingAndGlyphs">Web Site Login</text>
<path d="M9.5,114.5v8l-4,-4.0z" fill="#b9b5ad"/>
<text x="45.5" y="121.6" font-size="11" fill="#000" font-family='"Liberation Sans", sans-serif' textLength="67.5" lengthAdjust="spacingAndGlyphs">(62037 unre...</text>
<text x="145.5" y="121.6" font-size="11" fill="#000" font-family='"Liberation Sans", sans-serif' textLength="62.5" lengthAdjust="spacingAndGlyphs">AOL Mail (4...</text>
<text x="245.5" y="121.6" font-size="11" fill="#000" font-family='"Liberation Sans", sans-serif' textLength="66.5" lengthAdjust="spacing">http:/...62322</text>
<text x="346" y="121.6" font-size="11" fill="#000" font-family='"Liberation Sans", sans-serif' textLength="65" lengthAdjust="spacingAndGlyphs">Wednesday...</text>
<text x="445.5" y="121.6" font-size="11" fill="#000" font-family='"Liberation Sans", sans-serif' textLength="67.5" lengthAdjust="spacing">Inbox (6203...</text>
<text x="546" y="121.6" font-size="11" fill="#000" font-family='"Liberation Sans", sans-serif' font-weight="bold" textLength="44.5" lengthAdjust="spacing">htt...fdh</text>
<text x="645.5" y="121.6" font-size="11" fill="#000" font-family='"Liberation Sans", sans-serif' textLength="43.5" lengthAdjust="spacingAndGlyphs">CED Help</text>
<text x="745.5" y="121.6" font-size="11" fill="#000" font-family='"Liberation Sans", sans-serif' textLength="67.5" lengthAdjust="spacingAndGlyphs">SurveyMonk...</text>
<text x="845.5" y="121.6" font-size="11" fill="#000" font-family='"Liberation Sans", sans-serif' textLength="67.5" lengthAdjust="spacingAndGlyphs">SurveyMonk...</text>
<text x="946" y="121.6" font-size="11" fill="#000" font-family='"Liberation Sans", sans-serif'>&quot;</text>
<g transform="translate(26,110)"><rect width="16" height="16" rx="2.5" fill="#6b1a7e"/><rect x="2" y="4" width="12" height="8.5" fill="#eaf2fb"/><path d="M2,4 L8,9 L14,4" stroke="#9fb7d6" fill="none"/></g>
<g transform="translate(126,110)"><path d="M1,3 L14,0.5 L16,12 L5,15.5Z" fill="#000"/></g>
<text x="127.5" y="121" font-size="6.5" fill="#fff" font-family='"Liberation Sans", sans-serif' font-weight="bold" textLength="13" lengthAdjust="spacing">Aol.</text>
<g transform="translate(226,110)"><path d="M1,15.5 Q0,6 13,0 Q16,8 9,13 Q5,15 3,13 Z" fill="#6aac35"/><path d="M2,15 Q5,9 11,4" stroke="#cfe6b8" stroke-width="0.9" fill="none"/></g>
<g transform="translate(326,111)"><rect width="16" height="13" rx="2" fill="#e8202a"/><rect x="1.5" y="4" width="13" height="6" fill="#fff"/><rect x="3" y="6" width="10" height="2.4" fill="#333"/></g>
<g transform="translate(426,110)"><path d="M0,3 L6,3 L6,4.5 L5,4.5 L7.5,8 L10,5.5 L9,5.5 L9,4 L14,4 L14,5.5 L12.5,5.5 L8.5,9.5 L8.5,12 L10,12 L10,13.5 L4,13.5 L4,12 L5.5,12 L5.5,9.5 L1.5,4.5 L0,4.5Z" fill="#e0001a"/><path d="M14,3 L16,3.5 L14.5,9 L13.5,9Z M13,10.5 h1.6 v1.6 h-1.6z" fill="#e0001a"/></g>
<g transform="translate(526,110) scale(1.0)"><rect width="16" height="16" fill="#0f3468"/><path d="M1.800,14 Q0.200,5 10.200,0.800 Q6.400,4.200 5.800,8.600 Q5,12 1.800,14Z" fill="#f4f7fb"/><path d="M4.400,8 Q5.400,3.600 9.200,2 Q6.800,4.600 6.400,8Z" fill="#8fa9cc"/><path d="M5.800,15.600 Q5,9 8.200,6 Q11.400,4.600 13,8.200 L15,10.600 L12.600,10.900 L13.200,15 L10.800,13.600 L9.400,16 L7.800,14Z" fill="#fff"/><path d="M10.200,9 l2.600,1" stroke="#0f3468" stroke-width="0.700"/></g>
<path d="M598.5,114.5 l7,7 M605.5,114.5 l-7,7" stroke="#fff" stroke-width="2" fill="none"/>
<g transform="translate(626,110) scale(1.0)"><rect width="16" height="16" fill="#0f3468"/><path d="M1.800,14 Q0.200,5 10.200,0.800 Q6.400,4.200 5.800,8.600 Q5,12 1.800,14Z" fill="#f4f7fb"/><path d="M4.400,8 Q5.400,3.600 9.200,2 Q6.800,4.600 6.400,8Z" fill="#8fa9cc"/><path d="M5.800,15.600 Q5,9 8.200,6 Q11.400,4.600 13,8.200 L15,10.600 L12.600,10.900 L13.200,15 L10.800,13.600 L9.400,16 L7.800,14Z" fill="#fff"/><path d="M10.200,9 l2.600,1" stroke="#0f3468" stroke-width="0.700"/></g>
<g transform="translate(726,110)"><rect width="16" height="16" rx="2" fill="#fdfdfb"/><path d="M2.5,11 Q3,6 8,5.5 Q13,6 13.5,11 L11.5,11 Q11,7.5 8,7.5 Q5,7.5 4.5,11Z" fill="#a6c539"/><path d="M8,4 l2,2 h-4z" fill="#a6c539"/></g>
<g transform="translate(826,110)"><rect width="16" height="16" rx="2" fill="#fdfdfb"/><path d="M2.5,11 Q3,6 8,5.5 Q13,6 13.5,11 L11.5,11 Q11,7.5 8,7.5 Q5,7.5 4.5,11Z" fill="#a6c539"/><path d="M8,4 l2,2 h-4z" fill="#a6c539"/></g>
<g transform="translate(926,110)"><rect x="0" y="0" width="16" height="16" rx="2" fill="#fff"/><rect x="7" y="0" width="9" height="7" rx="1" fill="#e0202a"/><rect x="7" y="6" width="9" height="10" rx="2" fill="#1e9a48"/><ellipse cx="4.5" cy="4" rx="2.5" ry="3.5" fill="#2a5fd0"/><path d="M0,6 L5,9 L0,11Z" fill="#2a5fd0"/><ellipse cx="5" cy="13" rx="4" ry="2.6" fill="#f0b020"/><ellipse cx="9" cy="8" rx="2" ry="3" fill="#1e9a48"/></g>
<path d="M956.5,114 v9 l4.5,-4.5z" fill="#e4e1da" stroke="#8d8981" stroke-width="1"/>
<path d="M978,114.5 v8 M974,118.5 h8" stroke="#a8a49c" stroke-width="1.6"/>
<path d="M994.5,117.25h6l-3.0,3.5z" fill="#8d8981"/>
<text x="98.5" y="153.75" font-size="11" fill="#0000f0" font-family='"DejaVu Sans", "Liberation Sans", sans-serif' font-weight="bold" textLength="188.5" lengthAdjust="spacing">What did you buy or pay for?</text>
<text x="391.5" y="153.75" font-size="11" fill="#0000f0" font-family='"DejaVu Sans", "Liberation Sans", sans-serif' font-weight="bold" textLength="80" lengthAdjust="spacing">Is this item?</text>
<text x="522" y="145" font-size="11" fill="#0000f0" font-family='"DejaVu Sans", "Liberation Sans", sans-serif' font-weight="bold" textLength="65" lengthAdjust="spacing">Total Cost</text>
<text x="518.5" y="162.7" font-size="11" fill="#0000f0" font-family='"DejaVu Sans", "Liberation Sans", sans-serif' font-weight="bold" textLength="72" lengthAdjust="spacing">without tax</text>
<text x="652" y="145" font-size="11" fill="#0000f0" font-family='"DejaVu Sans", "Liberation Sans", sans-serif' font-weight="bold" textLength="91" lengthAdjust="spacing">purchased for</text>
<text x="648.5" y="162.7" font-size="11" fill="#0000f0" font-family='"DejaVu Sans", "Liberation Sans", sans-serif' font-weight="bold" textLength="99" lengthAdjust="spacing">someone not in</text>
<text x="664" y="180.4" font-size="11" fill="#0000f0" font-family='"DejaVu Sans", "Liberation Sans", sans-serif' font-weight="bold" textLength="67" lengthAdjust="spacing">household</text>
<text x="832.5" y="145" font-size="11" fill="#0000f0" font-family='"DejaVu Sans", "Liberation Sans", sans-serif' font-weight="bold" textLength="29" lengthAdjust="spacingAndGlyphs">Date</text>
<text x="813.5" y="162.7" font-size="11" fill="#0000f0" font-family='"DejaVu Sans", "Liberation Sans", sans-serif' font-weight="bold" textLength="67.5" lengthAdjust="spacing">Purchased</text>
<text x="918.75" y="153.75" font-size="11" fill="#0000f0" font-family='"DejaVu Sans", "Liberation Sans", sans-serif' font-weight="bold" textLength="33.5" lengthAdjust="spacing">Clear</text>
<defs><radialGradient id="rc" cx="0.5" cy="0.3" r="0.8"><stop offset="0" stop-color="#f4857c"/><stop offset="0.6" stop-color="#dd4a42"/><stop offset="1" stop-color="#c2302a"/></radialGradient></defs>
<path d="M476.0,206.5h7l-3.5,4z" fill="#000"/>
<text x="375.6" y="213.5" font-size="13" fill="#000" font-family='"Liberation Sans", sans-serif' textLength="64.5" lengthAdjust="spacing">Select One</text>
<path d="M873.0,206.5h7l-3.5,4z" fill="#000"/>
<text x="799.4" y="213.5" font-size="13" fill="#000" font-family='"Liberation Sans", sans-serif' textLength="65" lengthAdjust="spacing">Select One</text>
<circle cx="933.2" cy="212" r="7.2" fill="url(#rc)" stroke="#d9665e" stroke-width="0.8"/><rect x="929" y="210.6" width="8.4" height="3" rx="0.8" fill="#fff"/>
<path d="M476.0,243.5h7l-3.5,4z" fill="#000"/>
<text x="375.6" y="250.5" font-size="13" fill="#000" font-family='"Liberation Sans", sans-serif' textLength="64.5" lengthAdjust="spacing">Select One</text>
<path d="M873.0,243.5h7l-3.5,4z" fill="#000"/>
<text x="799.4" y="250.5" font-size="13" fill="#000" font-family='"Liberation Sans", sans-serif' textLength="65" lengthAdjust="spacing">Select One</text>
<circle cx="933.2" cy="249" r="7.2" fill="url(#rc)" stroke="#d9665e" stroke-width="0.8"/><rect x="929" y="247.6" width="8.4" height="3" rx="0.8" fill="#fff"/>
<path d="M476.0,279.5h7l-3.5,4z" fill="#000"/>
<text x="375.6" y="286.5" font-size="13" fill="#000" font-family='"Liberation Sans", sans-serif' textLength="64.5" lengthAdjust="spacing">Select One</text>
<path d="M873.0,279.5h7l-3.5,4z" fill="#000"/>
<text x="799.4" y="286.5" font-size="13" fill="#000" font-family='"Liberation Sans", sans-serif' textLength="65" lengthAdjust="spacing">Select One</text>
<circle cx="933.2" cy="285" r="7.2" fill="url(#rc)" stroke="#d9665e" stroke-width="0.8"/><rect x="929" y="283.6" width="8.4" height="3" rx="0.8" fill="#fff"/>
<path d="M476.0,316.5h7l-3.5,4z" fill="#000"/>
<text x="375.6" y="323.5" font-size="13" fill="#000" font-family='"Liberation Sans", sans-serif' textLength="64.5" lengthAdjust="spacing">Select One</text>
<path d="M873.0,316.5h7l-3.5,4z" fill="#000"/>
<text x="799.4" y="323.5" font-size="13" fill="#000" font-family='"Liberation Sans", sans-serif' textLength="65" lengthAdjust="spacing">Select One</text>
<circle cx="933.2" cy="322" r="7.2" fill="url(#rc)" stroke="#d9665e" stroke-width="0.8"/><rect x="929" y="320.6" width="8.4" height="3" rx="0.8" fill="#fff"/>
<path d="M476.0,353.5h7l-3.5,4z" fill="#000"/>
<text x="375.6" y="360.5" font-size="13" fill="#000" font-family='"Liberation Sans", sans-serif' textLength="64.5" lengthAdjust="spacing">Select One</text>
<path d="M873.0,353.5h7l-3.5,4z" fill="#000"/>
<text x="799.4" y="360.5" font-size="13" fill="#000" font-family='"Liberation Sans", sans-serif' textLength="65" lengthAdjust="spacing">Select One</text>
<circle cx="933.2" cy="359" r="7.2" fill="url(#rc)" stroke="#d9665e" stroke-width="0.8"/><rect x="929" y="357.6" width="8.4" height="3" rx="0.8" fill="#fff"/>
<path d="M476.0,390.5h7l-3.5,4z" fill="#000"/>
<text x="375.6" y="397.5" font-size="13" fill="#000" font-family='"Liberation Sans", sans-serif' textLength="64.5" lengthAdjust="spacing">Select One</text>
<path d="M873.0,390.5h7l-3.5,4z" fill="#000"/>
<text x="799.4" y="397.5" font-size="13" fill="#000" font-family='"Liberation Sans", sans-serif' textLength="65" lengthAdjust="spacing">Select One</text>
<circle cx="933.2" cy="396" r="7.2" fill="url(#rc)" stroke="#d9665e" stroke-width="0.8"/><rect x="929" y="394.6" width="8.4" height="3" rx="0.8" fill="#fff"/>
<path d="M476.0,427.5h7l-3.5,4z" fill="#000"/>
<text x="375.6" y="434.5" font-size="13" fill="#000" font-family='"Liberation Sans", sans-serif' textLength="64.5" lengthAdjust="spacing">Select One</text>
<path d="M873.0,427.5h7l-3.5,4z" fill="#000"/>
<text x="799.4" y="434.5" font-size="13" fill="#000" font-family='"Liberation Sans", sans-serif' textLength="65" lengthAdjust="spacing">Select One</text>
<circle cx="933.2" cy="433" r="7.2" fill="url(#rc)" stroke="#d9665e" stroke-width="0.8"/><rect x="929" y="431.6" width="8.4" height="3" rx="0.8" fill="#fff"/>
<path d="M476.0,463.5h7l-3.5,4z" fill="#000"/>
<text x="375.6" y="470.5" font-size="13" fill="#000" font-family='"Liberation Sans", sans-serif' textLength="64.5" lengthAdjust="spacing">Select One</text>
<path d="M873.0,463.5h7l-3.5,4z" fill="#000"/>
<text x="799.4" y="470.5" font-size="13" fill="#000" font-family='"Liberation Sans", sans-serif' textLength="65" lengthAdjust="spacing">Select One</text>
<circle cx="933.2" cy="469" r="7.2" fill="url(#rc)" stroke="#d9665e" stroke-width="0.8"/><rect x="929" y="467.6" width="8.4" height="3" rx="0.8" fill="#fff"/>
<path d="M476.0,500.5h7l-3.5,4z" fill="#000"/>
<text x="375.6" y="507.5" font-size="13" fill="#000" font-family='"Liberation Sans", sans-serif' textLength="64.5" lengthAdjust="spacing">Select One</text>
<path d="M873.0,500.5h7l-3.5,4z" fill="#000"/>
<text x="799.4" y="507.5" font-size="13" fill="#000" font-family='"Liberation Sans", sans-serif' textLength="65" lengthAdjust="spacing">Select One</text>
<circle cx="933.2" cy="506" r="7.2" fill="url(#rc)" stroke="#d9665e" stroke-width="0.8"/><rect x="929" y="504.6" width="8.4" height="3" rx="0.8" fill="#fff"/>
<path d="M476.0,538.5h7l-3.5,4z" fill="#000"/>
<text x="375.6" y="545.5" font-size="13" fill="#000" font-family='"Liberation Sans", sans-serif' textLength="64.5" lengthAdjust="spacing">Select One</text>
<path d="M873.0,538.5h7l-3.5,4z" fill="#000"/>
<text x="799.4" y="545.5" font-size="13" fill="#000" font-family='"Liberation Sans", sans-serif' textLength="65" lengthAdjust="spacing">Select One</text>
<circle cx="933.2" cy="544" r="7.2" fill="url(#rc)" stroke="#d9665e" stroke-width="0.8"/><rect x="929" y="542.6" width="8.4" height="3" rx="0.8" fill="#fff"/>
<text x="38" y="599.75" font-size="13" fill="#000" font-family='"Liberation Sans", sans-serif' textLength="61.5" lengthAdjust="spacing">Add Rows</text>
<text x="133" y="599.75" font-size="13" fill="#000" font-family='"Liberation Sans", sans-serif' textLength="102.5" lengthAdjust="spacing">Save and Submit</text>
<text x="873.5" y="577.5" font-size="11" fill="#000" font-family='"Liberation Sans", sans-serif' textLength="83" lengthAdjust="spacingAndGlyphs">Date of purchase</text>
<text x="68" y="652" font-size="12.5" fill="#fff" font-family='"DejaVu Sans", "Liberation Sans", sans-serif' font-weight="bold" textLength="132" lengthAdjust="spacing">Burden Statement</text>
<text x="329.8" y="652" font-size="12.5" fill="#fff" font-family='"DejaVu Sans", "Liberation Sans", sans-serif' font-weight="bold" textLength="89" lengthAdjust="spacing">Accessibility</text>
<text x="587" y="652" font-size="12.5" fill="#fff" font-family='"DejaVu Sans", "Liberation Sans", sans-serif' font-weight="bold" textLength="53" lengthAdjust="spacing">Privacy</text>
<text x="824" y="652" font-size="12.5" fill="#fff" font-family='"DejaVu Sans", "Liberation Sans", sans-serif' font-weight="bold" textLength="59" lengthAdjust="spacing">Security</text>
<path d="M993.5,141.5h7l-3.5,-4z" fill="#000"/>
<path d="M993.5,662.5h7l-3.5,4z" fill="#000"/>
<text x="5" y="687.6" font-size="11" fill="#000" font-family='"Liberation Sans", sans-serif' textLength="25" lengthAdjust="spacingAndGlyphs">Done</text>
<g transform="translate(970.5,677)"><path d="M2.600,6.500 V4.200 Q2.600,0.800 5.200,0.800 Q7.800,0.800 7.800,4.200 V6.500" stroke="#c9a227" stroke-width="1.500" fill="none"/><rect x="0.500" y="6.200" width="9.500" height="7.500" rx="1" fill="#ecc43a" stroke="#c39a1c" stroke-width="0.700"/><path d="M1.500,8.500 h7.500 M1.500,10.500 h7.500 M1.500,12.300 h7.500" stroke="#f6e08a" stroke-width="0.700"/></g>
<path d="M1004,681.500 l-11.500,11.500 M1004,685.500 l-7.500,7.500 M1004,689.500 l-3.500,3.500" stroke="#808080" stroke-width="1.300"/><path d="M1004,680.500 l-12.500,12.500 M1004,684.500 l-8.500,8.500 M1004,688.500 l-4.500,4.500" stroke="#fff" stroke-width="0.900"/></svg></div></body></html>
